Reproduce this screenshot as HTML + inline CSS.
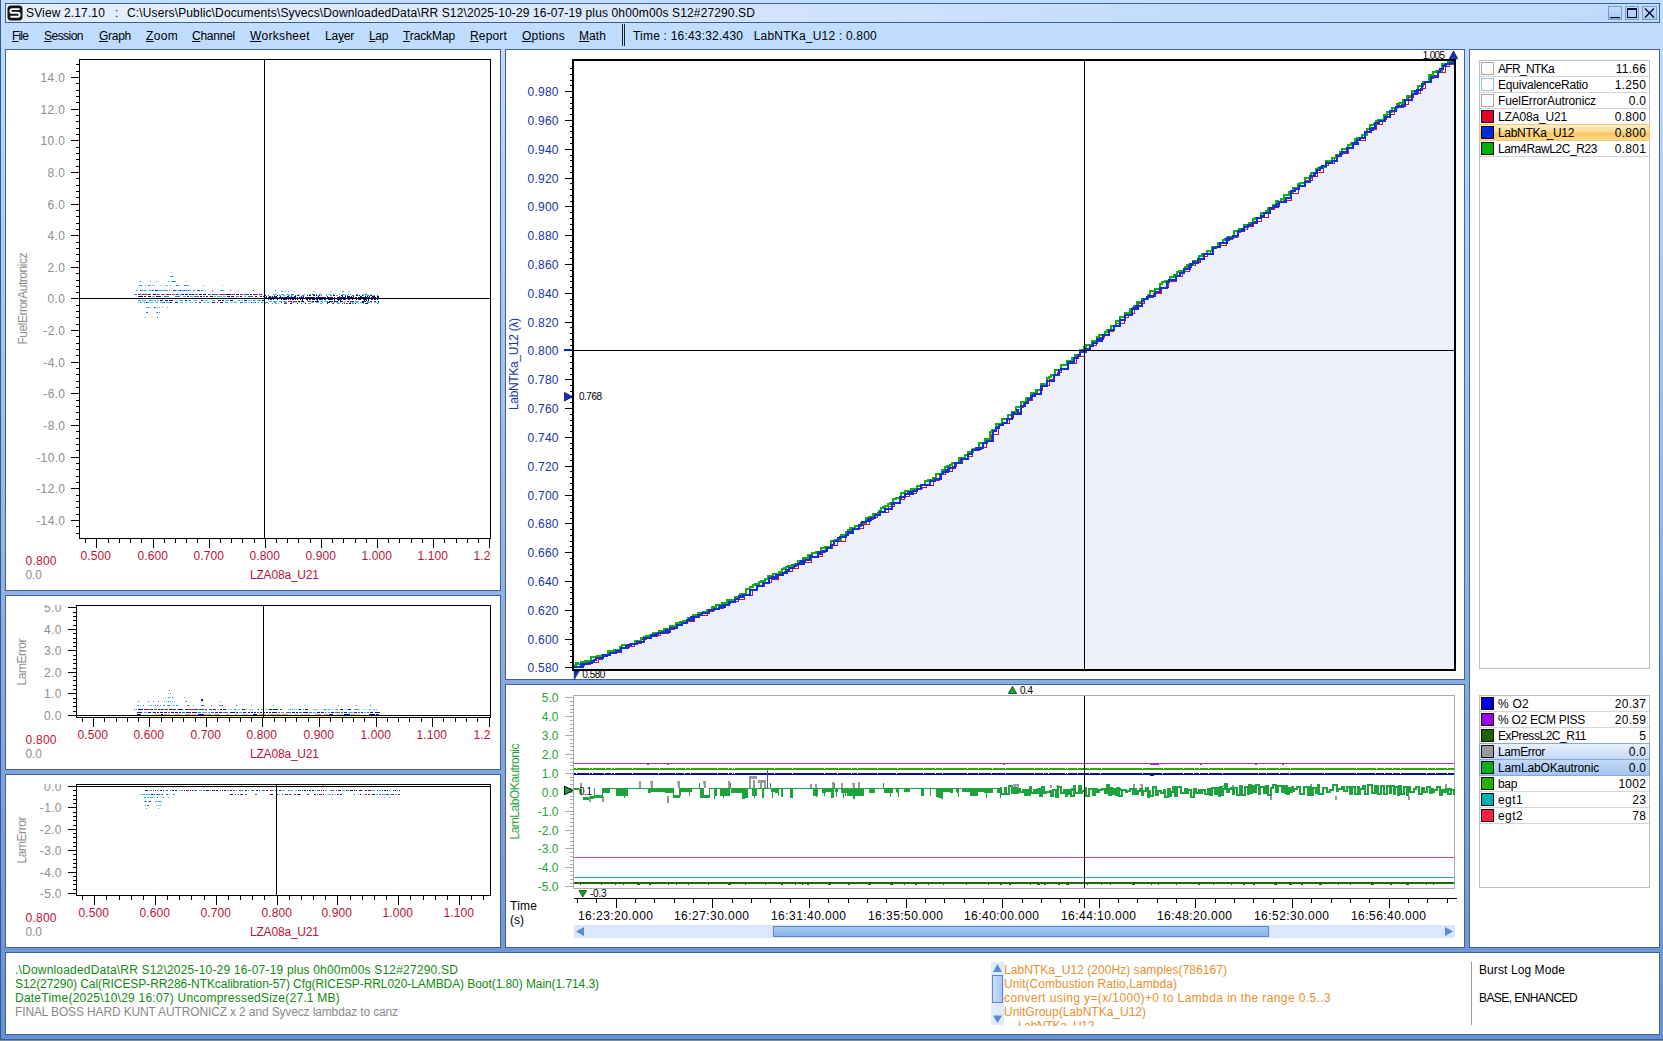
<!DOCTYPE html>
<html lang="en"><head><meta charset="utf-8"><title>SView 2.17.10</title>
<style>
html,body{margin:0;padding:0}
body{width:1663px;height:1041px;overflow:hidden;position:relative;font-family:"Liberation Sans",sans-serif;font-size:12px;color:#000;
background:linear-gradient(to bottom,#c1ddff 0px,#c1ddff 24px,#6592d2 1041px)}
.p{position:absolute;background:#fff;border:1px solid #45608f;box-sizing:border-box}
.t{position:absolute;white-space:nowrap;line-height:14px;height:14px}
.b{position:absolute;box-sizing:border-box}
#charts{position:absolute;left:0;top:0;pointer-events:none}
u{text-decoration:underline;text-underline-offset:1px}
.row{position:absolute;left:1480px;width:169px;height:16px;box-sizing:border-box;border-bottom:1px solid #d4d4d4}
.sw{position:absolute;left:1px;top:1px;width:13px;height:13px;box-sizing:border-box;border:1px solid #111}
.row .n{position:absolute;left:18px;top:1px;line-height:14px;white-space:nowrap}
.row .v{position:absolute;right:3px;top:1px;letter-spacing:0.3px;margin-right:-0.3px;line-height:14px;white-space:nowrap}

</style></head>
<body>
<div class="b" style="left:0px;top:0px;width:1px;height:1041px;background:#36568c"></div>
<div class="b" style="left:0px;top:1039px;width:1663px;height:1px;background:#3f5e94"></div>
<div class="b" style="left:0px;top:1040px;width:1663px;height:1px;background:#7f8b9b"></div>
<div class="p" style="left:5px;top:3px;width:1655px;height:20px;background:linear-gradient(to right,#e6f0fd 0,#dbe9fc 30%,#c1dbfc 75%,#c0dafb 100%);border-color:#3f5e94"></div>
<svg class="b" style="left:7px;top:5px" width="16" height="16" viewBox="0 0 16 16"><rect x="0.5" y="0.5" width="15" height="15" rx="3.5" fill="#111"/><path d="M12.6 4.1H5.2C3.6 4.1 3.4 5 3.4 5.9s.5 1.9 1.8 1.9h5.6c1.2 0 1.8.9 1.8 1.9s-.4 2-1.8 2H3.4" fill="none" stroke="#fff" stroke-width="1.9"/></svg>
<div class="t" id="title" style="top:6px;color:#000;left:26px;letter-spacing:0.141px;">SView 2.17.10</div>
<div class="t" id="title2" style="top:6px;color:#000;left:115px;">:</div>
<div class="t" id="title3" style="top:6px;color:#000;left:127px;letter-spacing:0.129px;">C:\Users\Public\Documents\Syvecs\DownloadedData\RR S12\2025-10-29 16-07-19 plus 0h00m00s S12#27290.SD</div>
<div class="b" style="left:1608px;top:6px;width:14px;height:14px;border:1px solid #7b9ccf;background:linear-gradient(#c6dcfc,#a9c8f6)"></div>
<div class="b" style="left:1625px;top:6px;width:14px;height:14px;border:1px solid #7b9ccf;background:linear-gradient(#c6dcfc,#a9c8f6)"></div>
<div class="b" style="left:1642px;top:6px;width:15px;height:14px;border:1px solid #7b9ccf;background:linear-gradient(#c6dcfc,#a9c8f6)"></div>
<svg class="b" style="left:1608px;top:6px" width="49" height="14" viewBox="0 0 49 14"><rect x="2" y="11" width="10" height="1.2" fill="#0a0a2a"/><rect x="19.5" y="3" width="9" height="8.5" fill="none" stroke="#0a0a2a" stroke-width="1"/><rect x="19" y="2" width="10" height="2" fill="#0a0a2a"/><path d="M37 2.5L46 11.5M46 2.5L37 11.5" stroke="#0a0a2a" stroke-width="1.4" fill="none"/></svg>
<div class="t" id="m0" style="top:29px;color:#000;left:12px;letter-spacing:-0.84px;"><u>F</u>ile</div>
<div class="t" id="m1" style="top:29px;color:#000;left:44px;letter-spacing:-0.529px;"><u>S</u>ession</div>
<div class="t" id="m2" style="top:29px;color:#000;left:99px;letter-spacing:-0.275px;"><u>G</u>raph</div>
<div class="t" id="m3" style="top:29px;color:#000;left:146px;letter-spacing:0.328px;"><u>Z</u>oom</div>
<div class="t" id="m4" style="top:29px;color:#000;left:192px;letter-spacing:-0.246px;"><u>C</u>hannel</div>
<div class="t" id="m5" style="top:29px;color:#000;left:250px;letter-spacing:0.318px;"><u>W</u>orksheet</div>
<div class="t" id="m6" style="top:29px;color:#000;left:325px;letter-spacing:-0.206px;">La<u>y</u>er</div>
<div class="t" id="m7" style="top:29px;color:#000;left:369px;letter-spacing:-0.349px;"><u>L</u>ap</div>
<div class="t" id="m8" style="top:29px;color:#000;left:403px;letter-spacing:-0.113px;"><u>T</u>rackMap</div>
<div class="t" id="m9" style="top:29px;color:#000;left:470px;letter-spacing:0.161px;"><u>R</u>eport</div>
<div class="t" id="m10" style="top:29px;color:#000;left:522px;letter-spacing:0.232px;"><u>O</u>ptions</div>
<div class="t" id="m11" style="top:29px;color:#000;left:579px;letter-spacing:0.078px;"><u>M</u>ath</div>
<div class="b" style="left:622px;top:24px;width:1px;height:22px;background:#222"></div>
<div class="b" style="left:624px;top:24px;width:1px;height:22px;background:#222"></div>
<div class="t" id="mtime" style="top:29px;color:#000;left:633px;letter-spacing:0.202px;">Time : 16:43:32.430 &nbsp; LabNTKa_U12 : 0.800</div>
<div class="p" style="left:5px;top:49px;width:496px;height:542px;"></div>
<div class="p" style="left:5px;top:595px;width:496px;height:175px;"></div>
<div class="p" style="left:5px;top:774px;width:496px;height:174px;"></div>
<div class="p" style="left:505px;top:49px;width:960px;height:631px;"></div>
<div class="p" style="left:505px;top:684px;width:960px;height:264px;"></div>
<div class="p" style="left:1469px;top:49px;width:191px;height:899px;"></div>
<div class="p" style="left:5px;top:952px;width:1655px;height:83px;"></div>
<div class="b" style="left:1479px;top:60px;width:171px;height:609px;border:1px solid #c0c0c0"></div>
<div class="b" style="left:1479px;top:695px;width:171px;height:193px;border:1px solid #c0c0c0"></div>
<div class="row" style="top:61px;"><div class="sw" style="background:#fff;border-color:#a8a8a8"></div><div class="n" id="la0" style="letter-spacing:-0.67px;">AFR_NTKa</div><div class="v">11.66</div></div>
<div class="row" style="top:77px;"><div class="sw" style="background:#fff;border-color:#9cc4e4"></div><div class="n" id="la1" style="letter-spacing:-0.213px;">EquivalenceRatio</div><div class="v">1.250</div></div>
<div class="row" style="top:93px;"><div class="sw" style="background:#fff;border-color:#a8a8a8"></div><div class="n" id="la2" style="letter-spacing:-0.113px;">FuelErrorAutronicz</div><div class="v">0.0</div></div>
<div class="row" style="top:109px;"><div class="sw" style="background:#e00028;border-color:#111"></div><div class="n" id="la3" style="letter-spacing:-0.172px;">LZA08a_U21</div><div class="v">0.800</div></div>
<div class="b" style="left:1479px;top:124px;width:171px;height:17px;border:1px solid #f2c47c;background:linear-gradient(#fdedc8,#fcdb94 45%,#fbc65e 55%,#fcd98e)"></div>
<div class="row" style="top:125px;border-bottom-color:transparent;"><div class="sw" style="background:#0028e0;border-color:#111"></div><div class="n" id="la4" style="letter-spacing:-0.308px;">LabNTKa_U12</div><div class="v">0.800</div></div>
<div class="row" style="top:141px;"><div class="sw" style="background:#00b000;border-color:#111"></div><div class="n" id="la5" style="letter-spacing:-0.41px;">Lam4RawL2C_R23</div><div class="v">0.801</div></div>
<div class="row" style="top:696px;"><div class="sw" style="background:#0000dc;border-color:#111"></div><div class="n" id="lb0" style="letter-spacing:0.246px;">% O2</div><div class="v">20.37</div></div>
<div class="row" style="top:712px;"><div class="sw" style="background:#a000f0;border-color:#111"></div><div class="n" id="lb1" style="letter-spacing:-0.285px;">% O2 ECM PISS</div><div class="v">20.59</div></div>
<div class="row" style="top:728px;"><div class="sw" style="background:#1a6400;border-color:#111"></div><div class="n" id="lb2" style="letter-spacing:-0.464px;">ExPressL2C_R11</div><div class="v">5</div></div>
<div class="b" style="left:1479px;top:743px;width:171px;height:17px;border:1px solid #88a9d8;background:linear-gradient(#eaf1fc,#c4d9f7)"></div>
<div class="row" style="top:744px;border-bottom-color:transparent;"><div class="sw" style="background:#999;border-color:#111"></div><div class="n" id="lb3" style="letter-spacing:-0.377px;">LamError</div><div class="v">0.0</div></div>
<div class="b" style="left:1479px;top:759px;width:171px;height:17px;border:1px solid #88a9d8;background:linear-gradient(#c4d9f7,#a6c5f2)"></div>
<div class="row" style="top:760px;border-bottom-color:transparent;"><div class="sw" style="background:#08b020;border-color:#111"></div><div class="n" id="lb4" style="letter-spacing:-0.15px;">LamLabOKautronic</div><div class="v">0.0</div></div>
<div class="row" style="top:776px;"><div class="sw" style="background:#28b000;border-color:#111"></div><div class="n" id="lb5" style="letter-spacing:-0.344px;">bap</div><div class="v">1002</div></div>
<div class="row" style="top:792px;"><div class="sw" style="background:#00b0b0;border-color:#111"></div><div class="n" id="lb6" style="letter-spacing:0.41px;">egt1</div><div class="v">23</div></div>
<div class="row" style="top:808px;"><div class="sw" style="background:#ff2040;border-color:#111"></div><div class="n" id="lb7" style="letter-spacing:0.41px;">egt2</div><div class="v">78</div></div>
<div class="t" id="s1" style="top:963px;color:#108a10;left:15px;letter-spacing:0.191px;">.\DownloadedData\RR S12\2025-10-29 16-07-19 plus 0h00m00s S12#27290.SD</div>
<div class="t" id="s2" style="top:977px;color:#108a10;left:15px;letter-spacing:-0.071px;">S12(27290) Cal(RICESP-RR286-NTKcalibration-57) Cfg(RICESP-RRL020-LAMBDA) Boot(1.80) Main(1.714.3)</div>
<div class="t" id="s3" style="top:991px;color:#108a10;left:15px;letter-spacing:0.23px;">DateTime(2025\10\29 16:07) UncompressedSize(27.1 MB)</div>
<div class="t" id="s4" style="top:1005px;color:#8a8a8a;left:15px;letter-spacing:-0.139px;">FINAL BOSS HARD KUNT AUTRONICZ x 2 and Syvecz lambdaz to canz</div>
<div class="b" style="left:990px;top:962px;width:520px;height:63px;overflow:hidden"></div>
<div class="t" id="o1" style="top:963px;color:#e8902c;left:1004px;letter-spacing:0.044px;">LabNTKa_U12 (200Hz) samples(786167)</div>
<div class="t" id="o2" style="top:977px;color:#e8902c;left:1004px;letter-spacing:0.054px;">Unit(Combustion Ratio,Lambda)</div>
<div class="t" id="o3" style="top:991px;color:#e8902c;left:1004px;letter-spacing:0.383px;">convert using y=(x/1000)+0 to Lambda in the range 0.5..3</div>
<div class="t" id="o4" style="top:1005px;color:#e8902c;left:1004px;letter-spacing:-0.004px;">UnitGroup(LabNTKa_U12)</div>
<div class="t" id="o5" style="top:1019px;color:#e8902c;left:1018px;letter-spacing:-0.308px;height:7px;overflow:hidden;">LabNTKa_U12</div>
<div class="b" style="left:991px;top:962px;width:13px;height:63px;background:#dfeafb"></div>
<div class="b" style="left:992px;top:975px;width:11px;height:28px;border:1px solid #5f86c4;background:linear-gradient(to right,#cfe0fa,#a9c7f3)"></div>
<svg class="b" style="left:991px;top:962px" width="13" height="63" viewBox="0 0 13 63"><path d="M2 10L6.5 2L11 10Z" fill="#5b8ad0"/><path d="M2 53.5L6.5 61L11 53.5Z" fill="#5b8ad0"/></svg>
<div class="b" style="left:1471px;top:962px;width:1px;height:63px;background:#9a9a9a"></div>
<div class="t" id="b1" style="top:963px;color:#000;left:1479px;letter-spacing:0.092px;">Burst Log Mode</div>
<div class="t" id="b2" style="top:991px;color:#000;left:1479px;letter-spacing:-0.574px;">BASE, ENHANCED</div>

<svg id="charts" width="1663" height="1041" viewBox="0 0 1663 1041" font-family='"Liberation Sans", sans-serif'>
<path d="M134 294h1v1h-1zM136 294h1v1h-1zM142 294h1v1h-1zM140 281h1v1h-1zM145 294h1v1h-1zM144 290h1v1h-1zM144 294h1v1h-1zM149 294h1v1h-1zM150 294h1v1h-1zM152 290h1v1h-1zM153 290h1v1h-1zM148 285h1v1h-1zM152 294h1v1h-1zM157 294h1v1h-1zM158 294h1v1h-1zM162 294h1v1h-1zM157 290h1v1h-1zM161 294h1v1h-1zM167 290h1v1h-1zM165 285h1v1h-1zM166 294h1v1h-1zM172 294h1v1h-1zM175 294h1v1h-1zM166 290h1v1h-1zM169 290h1v1h-1zM176 285h1v1h-1zM173 281h1v1h-1zM174 281h1v1h-1zM172 276h1v1h-1zM179 290h1v1h-1zM178 285h1v1h-1zM187 294h1v1h-1zM182 290h1v1h-1zM184 290h1v1h-1zM186 290h1v1h-1zM189 290h1v1h-1zM190 290h1v1h-1zM184 285h1v1h-1zM186 285h1v1h-1zM196 294h1v1h-1zM205 294h1v1h-1zM212 290h1v1h-1zM221 290h1v1h-1zM230 294h1v1h-1zM232 294h1v1h-1zM230 290h1v1h-1zM236 294h1v1h-1zM240 294h1v1h-1zM253 290h1v1h-1zM283 294h1v1h-1zM316 294h1v1h-1zM333 294h1v1h-1zM144 302h1v1h-1zM150 302h1v1h-1zM148 307h1v1h-1zM146 312h1v1h-1zM147 312h1v1h-1zM160 302h1v1h-1zM162 302h1v1h-1zM154 307h1v1h-1zM155 307h1v1h-1zM157 312h1v1h-1zM157 317h1v1h-1zM161 302h1v1h-1zM355 302h1v1h-1zM240 302h1v1h-1zM255 302h1v1h-1zM164 296h5v1h-5zM175 296h5v1h-5zM194 296h5v1h-5zM203 296h2v1h-2zM236 296h3v1h-3zM248 296h5v1h-5zM291 294h3v1h-3zM312 294h3v1h-3zM319 294h2v1h-2zM348 294h1v1h-1zM365 294h2v1h-2zM268 295h1v1h-1zM295 295h1v1h-1zM302 295h2v1h-2zM318 295h2v1h-2zM321 295h1v1h-1zM352 295h2v1h-2zM362 295h2v1h-2zM367 295h2v1h-2zM377 295h1v1h-1z" fill="#2a6ad0" shape-rendering="crispEdges"/>
<path d="M135 294h1v1h-1zM140 294h1v1h-1zM145 294h1v1h-1zM136 290h1v1h-1zM137 290h1v1h-1zM140 290h1v1h-1zM142 290h1v1h-1zM144 290h1v1h-1zM139 285h1v1h-1zM140 285h1v1h-1zM141 285h1v1h-1zM141 294h1v1h-1zM143 294h1v1h-1zM147 294h1v1h-1zM146 290h1v1h-1zM145 285h1v1h-1zM145 294h1v1h-1zM146 294h1v1h-1zM154 294h1v1h-1zM155 294h1v1h-1zM156 294h1v1h-1zM149 290h1v1h-1zM150 290h1v1h-1zM149 285h1v1h-1zM150 285h1v1h-1zM152 285h1v1h-1zM150 281h1v1h-1zM155 294h1v1h-1zM159 294h1v1h-1zM155 290h1v1h-1zM158 290h1v1h-1zM160 290h1v1h-1zM154 285h1v1h-1zM156 281h1v1h-1zM161 294h1v1h-1zM163 294h1v1h-1zM164 294h1v1h-1zM168 294h1v1h-1zM163 290h1v1h-1zM161 294h1v1h-1zM162 294h1v1h-1zM163 294h1v1h-1zM164 294h1v1h-1zM167 294h1v1h-1zM168 294h1v1h-1zM170 294h1v1h-1zM173 294h1v1h-1zM178 294h1v1h-1zM180 294h1v1h-1zM181 294h1v1h-1zM165 290h1v1h-1zM167 290h1v1h-1zM174 290h1v1h-1zM175 290h1v1h-1zM178 290h1v1h-1zM165 285h1v1h-1zM167 285h1v1h-1zM170 285h1v1h-1zM177 285h1v1h-1zM168 281h1v1h-1zM171 281h1v1h-1zM172 281h1v1h-1zM175 281h1v1h-1zM170 276h1v1h-1zM171 276h1v1h-1zM175 294h1v1h-1zM176 294h1v1h-1zM180 294h1v1h-1zM181 294h1v1h-1zM182 294h1v1h-1zM191 294h1v1h-1zM183 290h1v1h-1zM185 290h1v1h-1zM187 290h1v1h-1zM188 290h1v1h-1zM187 285h1v1h-1zM188 285h1v1h-1zM192 294h1v1h-1zM193 294h1v1h-1zM194 290h1v1h-1zM199 294h1v1h-1zM201 290h1v1h-1zM202 290h1v1h-1zM203 285h1v1h-1zM210 294h1v1h-1zM212 294h1v1h-1zM213 294h1v1h-1zM214 294h1v1h-1zM219 294h1v1h-1zM220 294h1v1h-1zM225 294h1v1h-1zM220 290h1v1h-1zM222 290h1v1h-1zM223 290h1v1h-1zM229 294h1v1h-1zM231 294h1v1h-1zM238 294h1v1h-1zM251 294h1v1h-1zM253 294h1v1h-1zM254 294h1v1h-1zM276 294h1v1h-1zM275 290h1v1h-1zM292 294h1v1h-1zM326 294h1v1h-1zM339 294h1v1h-1zM348 294h1v1h-1zM357 294h1v1h-1zM140 302h1v1h-1zM147 302h1v1h-1zM148 302h1v1h-1zM146 307h1v1h-1zM147 307h1v1h-1zM145 317h1v1h-1zM149 302h1v1h-1zM150 307h1v1h-1zM152 302h1v1h-1zM155 302h1v1h-1zM156 302h1v1h-1zM161 302h1v1h-1zM157 307h1v1h-1zM159 307h1v1h-1zM156 312h1v1h-1zM159 312h1v1h-1zM160 302h1v1h-1zM162 302h1v1h-1zM163 302h1v1h-1zM162 307h1v1h-1zM166 302h1v1h-1zM168 302h1v1h-1zM169 302h1v1h-1zM167 307h1v1h-1zM175 302h1v1h-1zM361 302h1v1h-1zM368 302h1v1h-1zM376 302h1v1h-1zM145 290h3v1h-3zM161 290h2v1h-2zM164 290h3v1h-3zM177 290h1v1h-1zM188 290h3v1h-3zM193 290h1v1h-1zM152 296h3v1h-3zM183 296h3v1h-3zM190 296h3v1h-3zM214 296h2v1h-2zM217 296h5v1h-5zM223 296h3v1h-3zM244 296h2v1h-2zM138 300h3v1h-3zM142 300h4v1h-4zM149 300h4v1h-4zM154 300h2v1h-2zM157 300h2v1h-2zM179 300h4v1h-4zM188 300h3v1h-3zM194 300h3v1h-3zM212 300h3v1h-3zM225 300h4v1h-4zM238 300h2v1h-2zM253 300h3v1h-3zM257 300h4v1h-4zM138 302h1v1h-1zM140 302h2v1h-2zM156 302h2v1h-2zM162 302h1v1h-1zM166 302h2v1h-2zM195 302h2v1h-2zM207 302h3v1h-3zM225 302h3v1h-3zM234 302h3v1h-3zM241 302h2v1h-2zM244 302h3v1h-3zM253 302h2v1h-2zM261 302h2v1h-2zM265 302h3v1h-3zM274 302h2v1h-2zM284 302h3v1h-3zM291 302h3v1h-3zM299 302h1v1h-1zM303 302h2v1h-2zM311 302h3v1h-3zM316 302h3v1h-3zM322 302h1v1h-1zM331 302h1v1h-1zM333 302h2v1h-2zM340 302h1v1h-1zM349 302h2v1h-2zM352 302h2v1h-2zM360 302h1v1h-1zM367 302h3v1h-3zM273 294h3v1h-3zM281 294h3v1h-3zM286 294h3v1h-3zM298 294h2v1h-2zM304 294h1v1h-1zM309 294h2v1h-2zM329 294h2v1h-2zM342 294h3v1h-3zM356 294h1v1h-1zM281 291h2v1h-2zM288 291h1v1h-1zM342 291h2v1h-2zM274 295h1v1h-1zM279 295h2v1h-2zM283 295h2v1h-2zM288 295h2v1h-2zM291 295h2v1h-2zM326 295h1v1h-1zM330 295h2v1h-2zM336 295h2v1h-2zM347 295h1v1h-1zM365 295h1v1h-1zM373 295h2v1h-2zM269 301h3v1h-3zM273 301h4v1h-4zM279 301h3v1h-3zM283 301h4v1h-4zM320 301h3v1h-3zM324 301h4v1h-4zM344 301h2v1h-2zM355 301h4v1h-4zM367 301h2v1h-2zM264 303h2v1h-2zM268 303h1v1h-1zM272 303h1v1h-1zM275 303h2v1h-2zM278 303h1v1h-1zM308 303h3v1h-3zM320 303h2v1h-2zM337 303h3v1h-3zM352 303h2v1h-2zM358 303h1v1h-1zM363 303h1v1h-1zM377 303h2v1h-2z" fill="#38b4e4" shape-rendering="crispEdges"/>
<path d="M139 294h1v1h-1zM141 290h1v1h-1zM143 290h1v1h-1zM142 285h1v1h-1zM149 294h1v1h-1zM143 290h1v1h-1zM152 294h1v1h-1zM146 290h1v1h-1zM147 290h1v1h-1zM151 290h1v1h-1zM156 294h1v1h-1zM159 290h1v1h-1zM158 294h1v1h-1zM162 294h1v1h-1zM164 294h1v1h-1zM160 285h1v1h-1zM174 294h1v1h-1zM179 294h1v1h-1zM177 290h1v1h-1zM166 285h1v1h-1zM169 281h1v1h-1zM169 276h1v1h-1zM171 272h1v1h-1zM174 294h1v1h-1zM177 294h1v1h-1zM176 290h1v1h-1zM183 294h1v1h-1zM186 294h1v1h-1zM185 285h1v1h-1zM186 281h1v1h-1zM194 294h1v1h-1zM195 294h1v1h-1zM203 290h1v1h-1zM205 290h1v1h-1zM221 294h1v1h-1zM224 294h1v1h-1zM222 285h1v1h-1zM237 294h1v1h-1zM238 290h1v1h-1zM246 294h1v1h-1zM274 294h1v1h-1zM299 294h1v1h-1zM307 294h1v1h-1zM364 294h1v1h-1zM371 294h1v1h-1zM176 300h2v1h-2zM204 300h4v1h-4zM241 300h2v1h-2zM248 300h4v1h-4zM143 302h1v1h-1zM149 302h3v1h-3zM180 302h3v1h-3zM185 302h3v1h-3zM190 302h3v1h-3zM203 302h3v1h-3zM230 302h3v1h-3zM248 302h2v1h-2zM257 302h3v1h-3zM295 302h2v1h-2zM336 302h3v1h-3zM343 302h2v1h-2zM355 302h3v1h-3zM371 302h1v1h-1zM374 302h3v1h-3zM378 302h2v1h-2zM279 294h1v1h-1zM350 294h2v1h-2zM362 294h2v1h-2zM284 291h2v1h-2zM294 291h1v1h-1zM313 291h2v1h-2zM330 291h2v1h-2zM348 291h2v1h-2z" fill="#7ccdf0" shape-rendering="crispEdges"/>
<path d="M138 294h3v1h-3zM208 294h2v1h-2zM212 294h2v1h-2zM215 294h3v1h-3zM244 294h5v1h-5zM259 294h3v1h-3zM173 290h3v1h-3zM197 290h3v1h-3z" fill="#3a3ab0" shape-rendering="crispEdges"/>
<path d="M142 294h5v1h-5zM148 294h3v1h-3zM157 294h2v1h-2zM162 294h3v1h-3zM166 294h5v1h-5zM172 294h2v1h-2zM176 294h2v1h-2zM196 294h2v1h-2zM220 294h5v1h-5zM232 294h3v1h-3zM240 294h3v1h-3zM253 294h5v1h-5zM288 301h4v1h-4zM293 301h4v1h-4zM308 301h3v1h-3zM347 301h2v1h-2zM350 301h4v1h-4zM370 301h2v1h-2zM374 301h2v1h-2zM284 303h3v1h-3zM301 303h1v1h-1zM332 303h2v1h-2zM342 303h1v1h-1zM344 303h1v1h-1zM346 303h2v1h-2z" fill="#a82038" shape-rendering="crispEdges"/>
<path d="M153 294h3v1h-3zM182 294h2v1h-2zM185 294h3v1h-3zM189 294h2v1h-2zM192 294h2v1h-2zM199 294h3v1h-3zM203 294h3v1h-3zM226 294h5v1h-5zM236 294h3v1h-3zM250 294h2v1h-2zM140 290h1v1h-1zM155 290h2v1h-2zM180 290h1v1h-1zM138 296h5v1h-5zM144 296h2v1h-2zM148 296h3v1h-3zM156 296h5v1h-5zM187 296h2v1h-2zM200 296h2v1h-2zM206 296h2v1h-2zM210 296h3v1h-3zM227 296h3v1h-3zM231 296h3v1h-3zM240 296h2v1h-2zM255 296h2v1h-2zM260 296h2v1h-2zM263 296h1v1h-1zM160 300h3v1h-3zM165 300h3v1h-3zM169 300h4v1h-4zM185 300h2v1h-2zM201 300h2v1h-2zM218 300h3v1h-3zM222 300h2v1h-2zM230 300h3v1h-3zM244 300h3v1h-3zM262 300h2v1h-2zM146 302h1v1h-1zM164 302h1v1h-1zM170 302h2v1h-2zM175 302h3v1h-3zM199 302h2v1h-2zM212 302h3v1h-3zM217 302h1v1h-1zM220 302h3v1h-3zM251 302h1v1h-1zM281 302h1v1h-1zM327 302h3v1h-3zM362 302h2v1h-2zM264 295h2v1h-2zM277 295h1v1h-1zM297 295h2v1h-2zM307 295h1v1h-1zM309 295h2v1h-2zM313 295h2v1h-2zM316 295h1v1h-1zM333 295h2v1h-2zM341 295h2v1h-2zM345 295h1v1h-1zM356 295h2v1h-2zM359 295h1v1h-1zM370 295h2v1h-2zM298 301h2v1h-2zM301 301h3v1h-3zM312 301h2v1h-2zM315 301h4v1h-4zM329 301h4v1h-4zM334 301h4v1h-4zM340 301h3v1h-3zM362 301h4v1h-4zM378 301h1v1h-1zM290 303h2v1h-2zM297 303h1v1h-1zM305 303h1v1h-1zM327 303h1v1h-1zM349 303h2v1h-2zM355 303h1v1h-1zM365 303h3v1h-3z" fill="#14148c" shape-rendering="crispEdges"/>
<path d="M264 297h1v3h-1zM265 297h1v2h-1zM266 296h1v2h-1zM268 297h1v3h-1zM269 296h1v3h-1zM270 296h1v4h-1zM271 297h1v3h-1zM272 296h1v3h-1zM273 297h1v3h-1zM274 296h1v3h-1zM275 296h1v3h-1zM276 296h1v3h-1zM277 297h1v3h-1zM279 297h1v2h-1zM280 296h1v3h-1zM281 297h1v3h-1zM282 297h1v2h-1zM283 297h1v3h-1zM284 297h1v3h-1zM285 297h1v3h-1zM286 297h1v3h-1zM287 296h1v3h-1zM288 296h1v4h-1zM289 297h1v2h-1zM290 297h1v3h-1zM291 296h1v2h-1zM292 297h1v3h-1zM293 297h1v3h-1zM294 296h1v3h-1zM295 296h1v4h-1zM297 297h1v3h-1zM299 297h1v2h-1zM300 297h1v3h-1zM301 296h1v3h-1zM302 297h1v4h-1zM303 296h1v2h-1zM305 297h1v2h-1zM306 297h1v3h-1zM307 297h1v4h-1zM308 297h1v2h-1zM309 297h1v3h-1zM310 297h1v3h-1zM311 297h1v2h-1zM312 297h1v3h-1zM313 297h1v3h-1zM314 297h1v3h-1zM316 297h1v3h-1zM317 297h1v4h-1zM318 296h1v2h-1zM319 297h1v3h-1zM320 297h1v3h-1zM321 297h1v3h-1zM322 297h1v3h-1zM323 297h1v2h-1zM324 297h1v3h-1zM325 297h1v3h-1zM327 296h1v2h-1zM328 297h1v3h-1zM329 297h1v3h-1zM330 297h1v3h-1zM331 297h1v3h-1zM332 297h1v3h-1zM334 297h1v4h-1zM337 297h1v3h-1zM338 297h1v4h-1zM339 296h1v4h-1zM340 297h1v4h-1zM341 297h1v3h-1zM342 296h1v3h-1zM343 297h1v3h-1zM344 297h1v3h-1zM345 296h1v4h-1zM347 296h1v2h-1zM348 296h1v4h-1zM349 296h1v4h-1zM350 297h1v2h-1zM351 296h1v3h-1zM352 297h1v3h-1zM353 296h1v3h-1zM355 297h1v2h-1zM356 297h1v3h-1zM358 297h1v3h-1zM359 297h1v3h-1zM360 296h1v4h-1zM361 296h1v3h-1zM362 297h1v2h-1zM363 297h1v3h-1zM364 297h1v4h-1zM365 296h1v4h-1zM366 297h1v4h-1zM367 296h1v3h-1zM368 297h1v4h-1zM369 296h1v3h-1zM371 297h1v3h-1zM372 296h1v4h-1zM373 296h1v3h-1zM374 296h1v4h-1zM375 297h1v3h-1zM377 296h1v4h-1zM378 296h1v3h-1z" fill="#14148c" shape-rendering="crispEdges"/>
<rect x="79.5" y="59.5" width="411" height="479" fill="none" stroke="#000" stroke-width="1" />
<rect x="76" y="533" width="3" height="1" fill="#000" />
<rect x="76" y="526" width="3" height="1" fill="#000" />
<rect x="71" y="520" width="8" height="1" fill="#000" />
<rect x="76" y="514" width="3" height="1" fill="#000" />
<rect x="76" y="507" width="3" height="1" fill="#000" />
<rect x="76" y="501" width="3" height="1" fill="#000" />
<rect x="76" y="495" width="3" height="1" fill="#000" />
<rect x="71" y="488" width="8" height="1" fill="#000" />
<rect x="76" y="482" width="3" height="1" fill="#000" />
<rect x="76" y="476" width="3" height="1" fill="#000" />
<rect x="76" y="469" width="3" height="1" fill="#000" />
<rect x="76" y="463" width="3" height="1" fill="#000" />
<rect x="71" y="457" width="8" height="1" fill="#000" />
<rect x="76" y="450" width="3" height="1" fill="#000" />
<rect x="76" y="444" width="3" height="1" fill="#000" />
<rect x="76" y="438" width="3" height="1" fill="#000" />
<rect x="76" y="431" width="3" height="1" fill="#000" />
<rect x="71" y="425" width="8" height="1" fill="#000" />
<rect x="76" y="419" width="3" height="1" fill="#000" />
<rect x="76" y="412" width="3" height="1" fill="#000" />
<rect x="76" y="406" width="3" height="1" fill="#000" />
<rect x="76" y="400" width="3" height="1" fill="#000" />
<rect x="71" y="393" width="8" height="1" fill="#000" />
<rect x="76" y="387" width="3" height="1" fill="#000" />
<rect x="76" y="381" width="3" height="1" fill="#000" />
<rect x="76" y="374" width="3" height="1" fill="#000" />
<rect x="76" y="368" width="3" height="1" fill="#000" />
<rect x="71" y="362" width="8" height="1" fill="#000" />
<rect x="76" y="355" width="3" height="1" fill="#000" />
<rect x="76" y="349" width="3" height="1" fill="#000" />
<rect x="76" y="343" width="3" height="1" fill="#000" />
<rect x="76" y="336" width="3" height="1" fill="#000" />
<rect x="71" y="330" width="8" height="1" fill="#000" />
<rect x="76" y="324" width="3" height="1" fill="#000" />
<rect x="76" y="317" width="3" height="1" fill="#000" />
<rect x="76" y="311" width="3" height="1" fill="#000" />
<rect x="76" y="305" width="3" height="1" fill="#000" />
<rect x="71" y="298" width="8" height="1" fill="#000" />
<rect x="76" y="292" width="3" height="1" fill="#000" />
<rect x="76" y="286" width="3" height="1" fill="#000" />
<rect x="76" y="280" width="3" height="1" fill="#000" />
<rect x="76" y="273" width="3" height="1" fill="#000" />
<rect x="71" y="267" width="8" height="1" fill="#000" />
<rect x="76" y="261" width="3" height="1" fill="#000" />
<rect x="76" y="254" width="3" height="1" fill="#000" />
<rect x="76" y="248" width="3" height="1" fill="#000" />
<rect x="76" y="242" width="3" height="1" fill="#000" />
<rect x="71" y="235" width="8" height="1" fill="#000" />
<rect x="76" y="229" width="3" height="1" fill="#000" />
<rect x="76" y="223" width="3" height="1" fill="#000" />
<rect x="76" y="216" width="3" height="1" fill="#000" />
<rect x="76" y="210" width="3" height="1" fill="#000" />
<rect x="71" y="204" width="8" height="1" fill="#000" />
<rect x="76" y="197" width="3" height="1" fill="#000" />
<rect x="76" y="191" width="3" height="1" fill="#000" />
<rect x="76" y="185" width="3" height="1" fill="#000" />
<rect x="76" y="178" width="3" height="1" fill="#000" />
<rect x="71" y="172" width="8" height="1" fill="#000" />
<rect x="76" y="166" width="3" height="1" fill="#000" />
<rect x="76" y="159" width="3" height="1" fill="#000" />
<rect x="76" y="153" width="3" height="1" fill="#000" />
<rect x="76" y="147" width="3" height="1" fill="#000" />
<rect x="71" y="140" width="8" height="1" fill="#000" />
<rect x="76" y="134" width="3" height="1" fill="#000" />
<rect x="76" y="128" width="3" height="1" fill="#000" />
<rect x="76" y="121" width="3" height="1" fill="#000" />
<rect x="76" y="115" width="3" height="1" fill="#000" />
<rect x="71" y="109" width="8" height="1" fill="#000" />
<rect x="76" y="102" width="3" height="1" fill="#000" />
<rect x="76" y="96" width="3" height="1" fill="#000" />
<rect x="76" y="90" width="3" height="1" fill="#000" />
<rect x="76" y="83" width="3" height="1" fill="#000" />
<rect x="71" y="77" width="8" height="1" fill="#000" />
<rect x="76" y="71" width="3" height="1" fill="#000" />
<rect x="76" y="64" width="3" height="1" fill="#000" />
<rect x="85" y="539" width="1" height="4" fill="#000" />
<rect x="96" y="539" width="1" height="9" fill="#000" />
<rect x="108" y="539" width="1" height="4" fill="#000" />
<rect x="119" y="539" width="1" height="4" fill="#000" />
<rect x="130" y="539" width="1" height="4" fill="#000" />
<rect x="141" y="539" width="1" height="4" fill="#000" />
<rect x="153" y="539" width="1" height="9" fill="#000" />
<rect x="164" y="539" width="1" height="4" fill="#000" />
<rect x="175" y="539" width="1" height="4" fill="#000" />
<rect x="186" y="539" width="1" height="4" fill="#000" />
<rect x="197" y="539" width="1" height="4" fill="#000" />
<rect x="209" y="539" width="1" height="9" fill="#000" />
<rect x="220" y="539" width="1" height="4" fill="#000" />
<rect x="231" y="539" width="1" height="4" fill="#000" />
<rect x="242" y="539" width="1" height="4" fill="#000" />
<rect x="254" y="539" width="1" height="4" fill="#000" />
<rect x="265" y="539" width="1" height="9" fill="#000" />
<rect x="276" y="539" width="1" height="4" fill="#000" />
<rect x="287" y="539" width="1" height="4" fill="#000" />
<rect x="298" y="539" width="1" height="4" fill="#000" />
<rect x="310" y="539" width="1" height="4" fill="#000" />
<rect x="321" y="539" width="1" height="9" fill="#000" />
<rect x="332" y="539" width="1" height="4" fill="#000" />
<rect x="343" y="539" width="1" height="4" fill="#000" />
<rect x="355" y="539" width="1" height="4" fill="#000" />
<rect x="366" y="539" width="1" height="4" fill="#000" />
<rect x="377" y="539" width="1" height="9" fill="#000" />
<rect x="388" y="539" width="1" height="4" fill="#000" />
<rect x="399" y="539" width="1" height="4" fill="#000" />
<rect x="411" y="539" width="1" height="4" fill="#000" />
<rect x="422" y="539" width="1" height="4" fill="#000" />
<rect x="433" y="539" width="1" height="9" fill="#000" />
<rect x="444" y="539" width="1" height="4" fill="#000" />
<rect x="456" y="539" width="1" height="4" fill="#000" />
<rect x="467" y="539" width="1" height="4" fill="#000" />
<rect x="478" y="539" width="1" height="4" fill="#000" />
<rect x="489" y="539" width="1" height="9" fill="#000" />
<text x="65" y="524.5" fill="#8e8e8e" font-size="12" text-anchor="end" textLength="28.7" lengthAdjust="spacing" >-14.0</text>
<text x="65" y="492.5" fill="#8e8e8e" font-size="12" text-anchor="end" textLength="28.7" lengthAdjust="spacing" >-12.0</text>
<text x="65" y="461.5" fill="#8e8e8e" font-size="12" text-anchor="end" textLength="28.7" lengthAdjust="spacing" >-10.0</text>
<text x="65" y="429.5" fill="#8e8e8e" font-size="12" text-anchor="end" textLength="21.7" lengthAdjust="spacing" >-8.0</text>
<text x="65" y="397.5" fill="#8e8e8e" font-size="12" text-anchor="end" textLength="21.7" lengthAdjust="spacing" >-6.0</text>
<text x="65" y="366.5" fill="#8e8e8e" font-size="12" text-anchor="end" textLength="21.7" lengthAdjust="spacing" >-4.0</text>
<text x="65" y="334.5" fill="#8e8e8e" font-size="12" text-anchor="end" textLength="21.7" lengthAdjust="spacing" >-2.0</text>
<text x="65" y="302.5" fill="#8e8e8e" font-size="12" text-anchor="end" textLength="17.5" lengthAdjust="spacing" >0.0</text>
<text x="65" y="271.5" fill="#8e8e8e" font-size="12" text-anchor="end" textLength="17.5" lengthAdjust="spacing" >2.0</text>
<text x="65" y="239.5" fill="#8e8e8e" font-size="12" text-anchor="end" textLength="17.5" lengthAdjust="spacing" >4.0</text>
<text x="65" y="208.5" fill="#8e8e8e" font-size="12" text-anchor="end" textLength="17.5" lengthAdjust="spacing" >6.0</text>
<text x="65" y="176.5" fill="#8e8e8e" font-size="12" text-anchor="end" textLength="17.5" lengthAdjust="spacing" >8.0</text>
<text x="65" y="144.5" fill="#8e8e8e" font-size="12" text-anchor="end" textLength="24.5" lengthAdjust="spacing" >10.0</text>
<text x="65" y="113.5" fill="#8e8e8e" font-size="12" text-anchor="end" textLength="24.5" lengthAdjust="spacing" >12.0</text>
<text x="65" y="81.5" fill="#8e8e8e" font-size="12" text-anchor="end" textLength="24.5" lengthAdjust="spacing" >14.0</text>
<clipPath id="cp1"><rect x="6" y="545" width="484.8" height="40"/></clipPath><g clip-path="url(#cp1)">
<text x="95.7" y="560.3" fill="#b8123a" font-size="12" text-anchor="middle" textLength="30.5" lengthAdjust="spacing" >0.500</text>
<text x="152.7" y="560.3" fill="#b8123a" font-size="12" text-anchor="middle" textLength="30.5" lengthAdjust="spacing" >0.600</text>
<text x="208.7" y="560.3" fill="#b8123a" font-size="12" text-anchor="middle" textLength="30.5" lengthAdjust="spacing" >0.700</text>
<text x="264.7" y="560.3" fill="#b8123a" font-size="12" text-anchor="middle" textLength="30.5" lengthAdjust="spacing" >0.800</text>
<text x="320.7" y="560.3" fill="#b8123a" font-size="12" text-anchor="middle" textLength="30.5" lengthAdjust="spacing" >0.900</text>
<text x="376.7" y="560.3" fill="#b8123a" font-size="12" text-anchor="middle" textLength="30.5" lengthAdjust="spacing" >1.000</text>
<text x="432.7" y="560.3" fill="#b8123a" font-size="12" text-anchor="middle" textLength="30.5" lengthAdjust="spacing" >1.100</text>
<text x="488.7" y="560.3" fill="#b8123a" font-size="12" text-anchor="middle" textLength="30.5" lengthAdjust="spacing" >1.200</text>
</g>
<rect x="264" y="60" width="1" height="478" fill="#000" />
<rect x="71" y="298" width="419" height="1" fill="#000" />
<text x="25.5" y="565.3" fill="#b8123a" font-size="12" text-anchor="start" textLength="31" lengthAdjust="spacing" >0.800</text>
<text x="25.5" y="579" fill="#8e8e8e" font-size="12" text-anchor="start" textLength="16.5" lengthAdjust="spacing" >0.0</text>
<text x="250" y="579" fill="#b8123a" font-size="12" text-anchor="start" textLength="69" lengthAdjust="spacing" >LZA08a_U21</text>
<text transform="translate(26.6,298.5) rotate(-90)" fill="#8e8e8e" font-size="12" text-anchor="middle" textLength="92" lengthAdjust="spacing">FuelErrorAutronicz</text>
<rect x="137" y="716" width="242" height="1" fill="#fdf2b0" />
<path d="M134 709h1v1h-1zM141 709h1v1h-1zM138 705h1v1h-1zM138 701h1v1h-1zM143 705h1v1h-1zM150 709h1v1h-1zM148 701h1v1h-1zM151 709h1v1h-1zM155 709h1v1h-1zM157 705h1v1h-1zM158 701h1v1h-1zM166 709h1v1h-1zM172 709h1v1h-1zM164 705h1v1h-1zM169 705h1v1h-1zM176 705h1v1h-1zM168 701h1v1h-1zM169 690h1v1h-1zM178 709h1v1h-1zM187 705h1v1h-1zM188 705h1v1h-1zM186 701h1v1h-1zM194 709h1v1h-1zM201 705h1v1h-1zM202 705h1v1h-1zM203 705h1v1h-1zM211 705h1v1h-1zM220 705h1v1h-1zM222 705h1v1h-1zM235 709h1v1h-1zM236 705h1v1h-1zM274 709h1v1h-1zM275 709h1v1h-1zM289 709h1v1h-1zM337 709h1v1h-1zM357 709h1v1h-1zM356 705h1v1h-1zM370 705h1v1h-1zM168 712h2v1h-2zM182 712h3v1h-3zM198 712h3v1h-3zM211 712h3v1h-3zM223 712h5v1h-5zM257 712h2v1h-2zM278 712h2v1h-2zM286 712h5v1h-5zM299 712h3v1h-3zM309 712h3v1h-3zM335 712h5v1h-5zM341 712h2v1h-2zM358 712h2v1h-2zM367 712h2v1h-2z" fill="#2a6ad0" shape-rendering="crispEdges"/>
<path d="M136 709h1v1h-1zM138 709h1v1h-1zM139 709h1v1h-1zM142 709h1v1h-1zM144 709h1v1h-1zM145 709h1v1h-1zM145 709h1v1h-1zM146 709h1v1h-1zM147 709h1v1h-1zM148 709h1v1h-1zM149 709h1v1h-1zM149 709h1v1h-1zM152 709h1v1h-1zM151 705h1v1h-1zM155 705h1v1h-1zM153 701h1v1h-1zM156 709h1v1h-1zM160 709h1v1h-1zM160 705h1v1h-1zM163 705h1v1h-1zM160 709h1v1h-1zM163 709h1v1h-1zM167 709h1v1h-1zM169 709h1v1h-1zM174 709h1v1h-1zM175 709h1v1h-1zM167 705h1v1h-1zM168 705h1v1h-1zM171 705h1v1h-1zM174 705h1v1h-1zM164 701h1v1h-1zM166 701h1v1h-1zM170 701h1v1h-1zM174 701h1v1h-1zM168 697h1v1h-1zM169 697h1v1h-1zM172 697h1v1h-1zM170 693h1v1h-1zM175 709h1v1h-1zM177 705h1v1h-1zM179 709h1v1h-1zM185 709h1v1h-1zM187 709h1v1h-1zM188 709h1v1h-1zM189 709h1v1h-1zM184 697h1v1h-1zM191 709h1v1h-1zM193 705h1v1h-1zM200 709h1v1h-1zM201 709h1v1h-1zM206 709h1v1h-1zM202 701h1v1h-1zM211 709h1v1h-1zM213 709h1v1h-1zM218 709h1v1h-1zM223 709h1v1h-1zM219 705h1v1h-1zM221 705h1v1h-1zM220 701h1v1h-1zM228 709h1v1h-1zM234 709h1v1h-1zM249 709h1v1h-1zM252 709h1v1h-1zM251 705h1v1h-1zM262 709h1v1h-1zM273 709h1v1h-1zM273 705h1v1h-1zM281 709h1v1h-1zM290 709h1v1h-1zM292 709h1v1h-1zM298 709h1v1h-1zM303 709h1v1h-1zM305 705h1v1h-1zM323 709h1v1h-1zM325 709h1v1h-1zM325 705h1v1h-1zM332 709h1v1h-1zM338 705h1v1h-1zM369 709h1v1h-1zM376 709h1v1h-1zM144 712h3v1h-3zM202 712h5v1h-5zM208 712h2v1h-2zM239 712h3v1h-3zM281 712h3v1h-3zM313 712h3v1h-3zM325 712h2v1h-2zM328 712h2v1h-2zM348 712h5v1h-5zM364 712h2v1h-2zM246 709h1v1h-1zM261 709h1v1h-1zM288 709h2v1h-2zM294 709h1v1h-1zM296 709h1v1h-1zM302 709h1v1h-1zM313 709h1v1h-1zM324 709h3v1h-3zM328 709h2v1h-2zM354 709h3v1h-3z" fill="#38b4e4" shape-rendering="crispEdges"/>
<path d="M140 705h1v1h-1zM144 709h1v1h-1zM152 709h1v1h-1zM148 705h1v1h-1zM150 705h1v1h-1zM155 709h1v1h-1zM154 705h1v1h-1zM163 709h1v1h-1zM164 709h1v1h-1zM161 709h1v1h-1zM165 709h1v1h-1zM173 709h1v1h-1zM177 709h1v1h-1zM173 705h1v1h-1zM172 701h1v1h-1zM165 697h1v1h-1zM170 697h1v1h-1zM173 697h1v1h-1zM168 693h1v1h-1zM181 709h1v1h-1zM186 709h1v1h-1zM185 701h1v1h-1zM192 709h1v1h-1zM199 709h1v1h-1zM202 709h1v1h-1zM204 705h1v1h-1zM212 709h1v1h-1zM220 709h1v1h-1zM221 709h1v1h-1zM244 709h1v1h-1zM250 709h1v1h-1zM272 709h1v1h-1zM288 709h1v1h-1zM290 705h1v1h-1zM314 709h1v1h-1zM340 709h1v1h-1zM347 709h1v1h-1zM358 709h1v1h-1zM363 709h1v1h-1zM370 709h1v1h-1zM217 709h2v1h-2zM230 709h2v1h-2zM237 709h3v1h-3zM263 709h1v1h-1zM265 709h3v1h-3zM315 709h3v1h-3zM335 709h2v1h-2zM345 709h2v1h-2zM359 709h1v1h-1zM363 709h1v1h-1zM365 709h2v1h-2zM372 709h3v1h-3z" fill="#7ccdf0" shape-rendering="crispEdges"/>
<path d="M201 699h2v2h-2zM138 709h5v1h-5zM151 709h2v1h-2zM158 709h2v1h-2zM169 709h3v1h-3zM178 709h5v1h-5zM185 709h3v1h-3zM195 709h3v1h-3zM137 712h5v1h-5zM148 712h3v1h-3zM153 712h3v1h-3zM157 712h2v1h-2zM160 712h3v1h-3zM164 712h3v1h-3zM171 712h3v1h-3zM175 712h3v1h-3zM179 712h2v1h-2zM186 712h5v1h-5zM192 712h5v1h-5zM215 712h3v1h-3zM219 712h3v1h-3zM230 712h5v1h-5zM236 712h2v1h-2zM243 712h3v1h-3zM248 712h2v1h-2zM251 712h2v1h-2zM254 712h2v1h-2zM260 712h2v1h-2zM263 712h2v1h-2zM266 712h2v1h-2zM269 712h2v1h-2zM272 712h5v1h-5zM292 712h3v1h-3zM296 712h2v1h-2zM303 712h5v1h-5zM317 712h3v1h-3zM321 712h3v1h-3zM331 712h3v1h-3zM344 712h3v1h-3zM354 712h3v1h-3zM361 712h2v1h-2zM370 712h3v1h-3zM375 712h5v1h-5zM220 709h2v1h-2zM223 709h3v1h-3zM242 709h3v1h-3zM258 709h1v1h-1zM269 709h3v1h-3zM273 709h2v1h-2zM276 709h2v1h-2zM280 709h1v1h-1zM299 709h2v1h-2zM305 709h3v1h-3zM340 709h3v1h-3zM348 709h3v1h-3zM137 714h4v1h-4zM161 714h2v1h-2zM198 714h6v1h-6zM253 714h4v1h-4zM329 714h4v1h-4zM344 714h6v1h-6zM369 714h6v1h-6zM376 714h3v1h-3z" fill="#14148c" shape-rendering="crispEdges"/>
<path d="M144 709h5v1h-5zM165 709h3v1h-3zM189 709h5v1h-5zM205 709h2v1h-2z" fill="#a82038" shape-rendering="crispEdges"/>
<path d="M154 709h3v1h-3zM161 709h3v1h-3zM173 709h3v1h-3zM199 709h5v1h-5zM209 709h3v1h-3zM213 709h3v1h-3z" fill="#3a3ab0" shape-rendering="crispEdges"/>
<path d="M154 714h6v1h-6zM164 714h6v1h-6zM192 714h4v1h-4zM226 714h4v1h-4zM243 714h6v1h-6zM289 714h2v1h-2zM294 714h4v1h-4zM304 714h6v1h-6zM337 714h6v1h-6zM351 714h6v1h-6zM358 714h2v1h-2z" fill="#e8c070" shape-rendering="crispEdges"/>
<path d="M175 714h6v1h-6zM185 714h6v1h-6zM214 714h6v1h-6zM264 714h2v1h-2zM268 714h6v1h-6zM275 714h6v1h-6zM301 714h2v1h-2zM315 714h6v1h-6z" fill="#e8a060" shape-rendering="crispEdges"/>
<path d="M205 714h6v1h-6zM235 714h2v1h-2zM259 714h4v1h-4zM282 714h6v1h-6zM324 714h4v1h-4z" fill="#f0a030" shape-rendering="crispEdges"/>
<rect x="76.5" y="605.5" width="414" height="112" fill="none" stroke="#000" stroke-width="1" />
<rect x="68" y="715" width="8" height="1" fill="#000" />
<rect x="73" y="711" width="3" height="1" fill="#000" />
<rect x="73" y="706" width="3" height="1" fill="#000" />
<rect x="73" y="702" width="3" height="1" fill="#000" />
<rect x="73" y="698" width="3" height="1" fill="#000" />
<rect x="68" y="693" width="8" height="1" fill="#000" />
<rect x="73" y="689" width="3" height="1" fill="#000" />
<rect x="73" y="685" width="3" height="1" fill="#000" />
<rect x="73" y="680" width="3" height="1" fill="#000" />
<rect x="73" y="676" width="3" height="1" fill="#000" />
<rect x="68" y="672" width="8" height="1" fill="#000" />
<rect x="73" y="668" width="3" height="1" fill="#000" />
<rect x="73" y="663" width="3" height="1" fill="#000" />
<rect x="73" y="659" width="3" height="1" fill="#000" />
<rect x="73" y="655" width="3" height="1" fill="#000" />
<rect x="68" y="650" width="8" height="1" fill="#000" />
<rect x="73" y="646" width="3" height="1" fill="#000" />
<rect x="73" y="642" width="3" height="1" fill="#000" />
<rect x="73" y="638" width="3" height="1" fill="#000" />
<rect x="73" y="633" width="3" height="1" fill="#000" />
<rect x="68" y="629" width="8" height="1" fill="#000" />
<rect x="73" y="625" width="3" height="1" fill="#000" />
<rect x="73" y="620" width="3" height="1" fill="#000" />
<rect x="73" y="616" width="3" height="1" fill="#000" />
<rect x="73" y="612" width="3" height="1" fill="#000" />
<rect x="68" y="607" width="8" height="1" fill="#000" />
<rect x="82" y="718" width="1" height="4" fill="#000" />
<rect x="93" y="718" width="1" height="9" fill="#000" />
<rect x="104" y="718" width="1" height="4" fill="#000" />
<rect x="116" y="718" width="1" height="4" fill="#000" />
<rect x="127" y="718" width="1" height="4" fill="#000" />
<rect x="138" y="718" width="1" height="4" fill="#000" />
<rect x="149" y="718" width="1" height="9" fill="#000" />
<rect x="161" y="718" width="1" height="4" fill="#000" />
<rect x="172" y="718" width="1" height="4" fill="#000" />
<rect x="183" y="718" width="1" height="4" fill="#000" />
<rect x="195" y="718" width="1" height="4" fill="#000" />
<rect x="206" y="718" width="1" height="9" fill="#000" />
<rect x="217" y="718" width="1" height="4" fill="#000" />
<rect x="229" y="718" width="1" height="4" fill="#000" />
<rect x="240" y="718" width="1" height="4" fill="#000" />
<rect x="251" y="718" width="1" height="4" fill="#000" />
<rect x="262" y="718" width="1" height="9" fill="#000" />
<rect x="274" y="718" width="1" height="4" fill="#000" />
<rect x="285" y="718" width="1" height="4" fill="#000" />
<rect x="296" y="718" width="1" height="4" fill="#000" />
<rect x="308" y="718" width="1" height="4" fill="#000" />
<rect x="319" y="718" width="1" height="9" fill="#000" />
<rect x="330" y="718" width="1" height="4" fill="#000" />
<rect x="342" y="718" width="1" height="4" fill="#000" />
<rect x="353" y="718" width="1" height="4" fill="#000" />
<rect x="364" y="718" width="1" height="4" fill="#000" />
<rect x="376" y="718" width="1" height="9" fill="#000" />
<rect x="387" y="718" width="1" height="4" fill="#000" />
<rect x="398" y="718" width="1" height="4" fill="#000" />
<rect x="409" y="718" width="1" height="4" fill="#000" />
<rect x="421" y="718" width="1" height="4" fill="#000" />
<rect x="432" y="718" width="1" height="9" fill="#000" />
<rect x="443" y="718" width="1" height="4" fill="#000" />
<rect x="455" y="718" width="1" height="4" fill="#000" />
<rect x="466" y="718" width="1" height="4" fill="#000" />
<rect x="477" y="718" width="1" height="4" fill="#000" />
<rect x="489" y="718" width="1" height="9" fill="#000" />
<clipPath id="cp2"><rect x="6" y="605" width="484.8" height="160"/></clipPath><g clip-path="url(#cp2)">
<text x="61.5" y="719.5" fill="#8e8e8e" font-size="12" text-anchor="end" textLength="17.5" lengthAdjust="spacing" >0.0</text>
<text x="61.5" y="697.5" fill="#8e8e8e" font-size="12" text-anchor="end" textLength="17.5" lengthAdjust="spacing" >1.0</text>
<text x="61.5" y="676.5" fill="#8e8e8e" font-size="12" text-anchor="end" textLength="17.5" lengthAdjust="spacing" >2.0</text>
<text x="61.5" y="654.5" fill="#8e8e8e" font-size="12" text-anchor="end" textLength="17.5" lengthAdjust="spacing" >3.0</text>
<text x="61.5" y="633.5" fill="#8e8e8e" font-size="12" text-anchor="end" textLength="17.5" lengthAdjust="spacing" >4.0</text>
<text x="61.5" y="611.5" fill="#8e8e8e" font-size="12" text-anchor="end" textLength="17.5" lengthAdjust="spacing" >5.0</text>
<text x="92.7" y="738.8" fill="#b8123a" font-size="12" text-anchor="middle" textLength="30.5" lengthAdjust="spacing" >0.500</text>
<text x="148.7" y="738.8" fill="#b8123a" font-size="12" text-anchor="middle" textLength="30.5" lengthAdjust="spacing" >0.600</text>
<text x="205.7" y="738.8" fill="#b8123a" font-size="12" text-anchor="middle" textLength="30.5" lengthAdjust="spacing" >0.700</text>
<text x="261.7" y="738.8" fill="#b8123a" font-size="12" text-anchor="middle" textLength="30.5" lengthAdjust="spacing" >0.800</text>
<text x="318.7" y="738.8" fill="#b8123a" font-size="12" text-anchor="middle" textLength="30.5" lengthAdjust="spacing" >0.900</text>
<text x="375.7" y="738.8" fill="#b8123a" font-size="12" text-anchor="middle" textLength="30.5" lengthAdjust="spacing" >1.000</text>
<text x="431.7" y="738.8" fill="#b8123a" font-size="12" text-anchor="middle" textLength="30.5" lengthAdjust="spacing" >1.100</text>
<text x="488.7" y="738.8" fill="#b8123a" font-size="12" text-anchor="middle" textLength="30.5" lengthAdjust="spacing" >1.200</text>
</g>
<rect x="263" y="606" width="1" height="111" fill="#000" />
<rect x="68" y="715" width="422" height="1" fill="#000" />
<text x="25.5" y="743.7" fill="#b8123a" font-size="12" text-anchor="start" textLength="31" lengthAdjust="spacing" >0.800</text>
<text x="25.5" y="757.8" fill="#8e8e8e" font-size="12" text-anchor="start" textLength="16.5" lengthAdjust="spacing" >0.0</text>
<text x="250" y="757.8" fill="#b8123a" font-size="12" text-anchor="start" textLength="69" lengthAdjust="spacing" >LZA08a_U21</text>
<text transform="translate(26.4,662) rotate(-90)" fill="#8e8e8e" font-size="12" text-anchor="middle" textLength="47" lengthAdjust="spacing">LamError</text>
<path d="M140 794h1v1h-1zM142 794h1v1h-1zM143 794h1v1h-1zM146 794h1v1h-1zM147 794h1v1h-1zM148 794h1v1h-1zM151 794h1v1h-1zM152 794h1v1h-1zM144 797h1v1h-1zM147 797h1v1h-1zM148 797h1v1h-1zM150 797h1v1h-1zM144 801h1v1h-1zM146 801h1v1h-1zM148 801h1v1h-1zM145 805h1v1h-1zM146 808h1v1h-1zM147 794h1v1h-1zM149 794h1v1h-1zM153 794h1v1h-1zM151 797h1v1h-1zM152 797h1v1h-1zM159 794h1v1h-1zM161 794h1v1h-1zM154 797h1v1h-1zM162 797h1v1h-1zM155 801h1v1h-1zM156 801h1v1h-1zM158 801h1v1h-1zM160 801h1v1h-1zM161 801h1v1h-1zM156 805h1v1h-1zM158 805h1v1h-1zM160 805h1v1h-1zM158 808h1v1h-1zM163 797h1v1h-1zM168 797h1v1h-1zM174 794h1v1h-1zM372 794h1v1h-1zM377 794h1v1h-1zM378 797h1v1h-1zM385 794h1v1h-1zM384 797h1v1h-1zM390 794h1v1h-1zM391 794h1v1h-1zM390 797h1v1h-1zM396 794h1v1h-1zM300 794h1v1h-1zM340 794h1v1h-1zM149 790h3v1h-3zM157 790h2v1h-2zM179 790h2v1h-2zM199 790h3v1h-3zM227 790h2v1h-2zM275 790h3v1h-3zM282 790h3v1h-3zM291 790h2v1h-2zM295 790h2v1h-2zM315 790h1v1h-1zM325 790h2v1h-2zM329 790h1v1h-1zM342 790h3v1h-3zM372 790h3v1h-3zM379 790h2v1h-2zM389 790h2v1h-2zM397 790h1v1h-1zM144 794h2v1h-2zM147 794h2v1h-2zM169 794h1v1h-1zM237 794h2v1h-2zM279 794h1v1h-1zM328 794h3v1h-3zM335 794h1v1h-1zM358 794h1v1h-1zM376 794h1v1h-1zM379 794h2v1h-2zM383 794h2v1h-2zM395 794h2v1h-2z" fill="#38b4e4" shape-rendering="crispEdges"/>
<path d="M145 797h1v1h-1zM145 801h1v1h-1zM149 801h1v1h-1zM147 805h1v1h-1zM148 805h1v1h-1zM150 801h1v1h-1zM153 794h1v1h-1zM154 794h1v1h-1zM157 794h1v1h-1zM158 794h1v1h-1zM157 797h1v1h-1zM159 801h1v1h-1zM166 794h1v1h-1zM379 794h1v1h-1zM380 794h1v1h-1zM382 794h1v1h-1zM386 794h1v1h-1zM388 794h1v1h-1zM392 794h1v1h-1zM320 794h1v1h-1zM153 790h1v1h-1zM166 790h2v1h-2zM170 790h1v1h-1zM194 790h3v1h-3zM203 790h2v1h-2zM236 790h1v1h-1zM239 790h2v1h-2zM248 790h1v1h-1zM251 790h3v1h-3zM262 790h3v1h-3zM288 790h2v1h-2zM298 790h3v1h-3zM317 790h3v1h-3zM346 790h3v1h-3zM377 790h1v1h-1zM154 794h1v1h-1zM156 794h1v1h-1zM158 794h2v1h-2zM166 794h2v1h-2zM173 794h1v1h-1z" fill="#2a6ad0" shape-rendering="crispEdges"/>
<path d="M145 790h3v1h-3zM155 790h1v1h-1zM160 790h2v1h-2zM163 790h1v1h-1zM172 790h2v1h-2zM175 790h2v1h-2zM184 790h1v1h-1zM190 790h1v1h-1zM192 790h1v1h-1zM206 790h3v1h-3zM212 790h3v1h-3zM216 790h2v1h-2zM222 790h1v1h-1zM224 790h2v1h-2zM230 790h2v1h-2zM242 790h1v1h-1zM245 790h2v1h-2zM256 790h2v1h-2zM259 790h1v1h-1zM266 790h2v1h-2zM279 790h2v1h-2zM302 790h1v1h-1zM304 790h2v1h-2zM307 790h1v1h-1zM309 790h2v1h-2zM312 790h2v1h-2zM321 790h1v1h-1zM323 790h1v1h-1zM338 790h3v1h-3zM350 790h3v1h-3zM354 790h1v1h-1zM356 790h1v1h-1zM359 790h3v1h-3zM365 790h2v1h-2zM368 790h3v1h-3zM382 790h1v1h-1zM384 790h2v1h-2zM387 790h1v1h-1zM393 790h1v1h-1zM395 790h1v1h-1zM399 790h1v1h-1zM151 794h2v1h-2zM162 794h1v1h-1zM230 794h3v1h-3zM270 794h3v1h-3zM297 794h3v1h-3zM314 794h2v1h-2zM323 794h1v1h-1zM340 794h2v1h-2zM360 794h1v1h-1zM372 794h3v1h-3z" fill="#14148c" shape-rendering="crispEdges"/>
<path d="M182 790h1v1h-1zM186 790h3v1h-3zM210 790h1v1h-1zM220 790h1v1h-1zM233 790h2v1h-2zM270 790h3v1h-3zM331 790h3v1h-3zM336 790h1v1h-1zM235 794h1v1h-1zM282 794h1v1h-1zM294 794h2v1h-2zM317 794h1v1h-1zM319 794h3v1h-3zM332 794h1v1h-1zM365 794h2v1h-2zM368 794h2v1h-2zM398 794h2v1h-2z" fill="#a82038" shape-rendering="crispEdges"/>
<path d="M240 794h3v1h-3zM245 794h2v1h-2zM255 794h2v1h-2zM276 794h2v1h-2zM285 794h3v1h-3zM289 794h2v1h-2zM307 794h2v1h-2zM337 794h2v1h-2zM354 794h1v1h-1zM387 794h2v1h-2zM391 794h3v1h-3z" fill="#3a3ab0" shape-rendering="crispEdges"/>
<path d="M322 785h2v1h-2z" fill="#f0a030" shape-rendering="crispEdges"/>
<rect x="76.5" y="784.5" width="414" height="111" fill="none" stroke="#000" stroke-width="1" />
<rect x="68" y="893" width="8" height="1" fill="#000" />
<rect x="73" y="889" width="3" height="1" fill="#000" />
<rect x="73" y="884" width="3" height="1" fill="#000" />
<rect x="73" y="880" width="3" height="1" fill="#000" />
<rect x="73" y="876" width="3" height="1" fill="#000" />
<rect x="68" y="872" width="8" height="1" fill="#000" />
<rect x="73" y="867" width="3" height="1" fill="#000" />
<rect x="73" y="863" width="3" height="1" fill="#000" />
<rect x="73" y="859" width="3" height="1" fill="#000" />
<rect x="73" y="854" width="3" height="1" fill="#000" />
<rect x="68" y="850" width="8" height="1" fill="#000" />
<rect x="73" y="846" width="3" height="1" fill="#000" />
<rect x="73" y="842" width="3" height="1" fill="#000" />
<rect x="73" y="837" width="3" height="1" fill="#000" />
<rect x="73" y="833" width="3" height="1" fill="#000" />
<rect x="68" y="829" width="8" height="1" fill="#000" />
<rect x="73" y="825" width="3" height="1" fill="#000" />
<rect x="73" y="820" width="3" height="1" fill="#000" />
<rect x="73" y="816" width="3" height="1" fill="#000" />
<rect x="73" y="812" width="3" height="1" fill="#000" />
<rect x="68" y="807" width="8" height="1" fill="#000" />
<rect x="73" y="803" width="3" height="1" fill="#000" />
<rect x="73" y="799" width="3" height="1" fill="#000" />
<rect x="73" y="795" width="3" height="1" fill="#000" />
<rect x="73" y="790" width="3" height="1" fill="#000" />
<rect x="68" y="786" width="8" height="1" fill="#000" />
<rect x="82" y="896" width="1" height="4" fill="#000" />
<rect x="94" y="896" width="1" height="9" fill="#000" />
<rect x="106" y="896" width="1" height="4" fill="#000" />
<rect x="119" y="896" width="1" height="4" fill="#000" />
<rect x="131" y="896" width="1" height="4" fill="#000" />
<rect x="143" y="896" width="1" height="4" fill="#000" />
<rect x="155" y="896" width="1" height="9" fill="#000" />
<rect x="167" y="896" width="1" height="4" fill="#000" />
<rect x="179" y="896" width="1" height="4" fill="#000" />
<rect x="191" y="896" width="1" height="4" fill="#000" />
<rect x="204" y="896" width="1" height="4" fill="#000" />
<rect x="216" y="896" width="1" height="9" fill="#000" />
<rect x="228" y="896" width="1" height="4" fill="#000" />
<rect x="240" y="896" width="1" height="4" fill="#000" />
<rect x="252" y="896" width="1" height="4" fill="#000" />
<rect x="264" y="896" width="1" height="4" fill="#000" />
<rect x="277" y="896" width="1" height="9" fill="#000" />
<rect x="289" y="896" width="1" height="4" fill="#000" />
<rect x="301" y="896" width="1" height="4" fill="#000" />
<rect x="313" y="896" width="1" height="4" fill="#000" />
<rect x="325" y="896" width="1" height="4" fill="#000" />
<rect x="337" y="896" width="1" height="9" fill="#000" />
<rect x="350" y="896" width="1" height="4" fill="#000" />
<rect x="362" y="896" width="1" height="4" fill="#000" />
<rect x="374" y="896" width="1" height="4" fill="#000" />
<rect x="386" y="896" width="1" height="4" fill="#000" />
<rect x="398" y="896" width="1" height="9" fill="#000" />
<rect x="410" y="896" width="1" height="4" fill="#000" />
<rect x="423" y="896" width="1" height="4" fill="#000" />
<rect x="435" y="896" width="1" height="4" fill="#000" />
<rect x="447" y="896" width="1" height="4" fill="#000" />
<rect x="459" y="896" width="1" height="9" fill="#000" />
<rect x="471" y="896" width="1" height="4" fill="#000" />
<rect x="483" y="896" width="1" height="4" fill="#000" />
<clipPath id="cp3"><rect x="6" y="784" width="486" height="160"/></clipPath><g clip-path="url(#cp3)">
<text x="61.5" y="897.5" fill="#8e8e8e" font-size="12" text-anchor="end" textLength="21.7" lengthAdjust="spacing" >-5.0</text>
<text x="61.5" y="876.5" fill="#8e8e8e" font-size="12" text-anchor="end" textLength="21.7" lengthAdjust="spacing" >-4.0</text>
<text x="61.5" y="854.5" fill="#8e8e8e" font-size="12" text-anchor="end" textLength="21.7" lengthAdjust="spacing" >-3.0</text>
<text x="61.5" y="833.5" fill="#8e8e8e" font-size="12" text-anchor="end" textLength="21.7" lengthAdjust="spacing" >-2.0</text>
<text x="61.5" y="811.5" fill="#8e8e8e" font-size="12" text-anchor="end" textLength="21.7" lengthAdjust="spacing" >-1.0</text>
<text x="61.5" y="790.5" fill="#8e8e8e" font-size="12" text-anchor="end" textLength="17.5" lengthAdjust="spacing" >0.0</text>
<text x="93.7" y="916.5" fill="#b8123a" font-size="12" text-anchor="middle" textLength="30.5" lengthAdjust="spacing" >0.500</text>
<text x="154.7" y="916.5" fill="#b8123a" font-size="12" text-anchor="middle" textLength="30.5" lengthAdjust="spacing" >0.600</text>
<text x="215.7" y="916.5" fill="#b8123a" font-size="12" text-anchor="middle" textLength="30.5" lengthAdjust="spacing" >0.700</text>
<text x="276.7" y="916.5" fill="#b8123a" font-size="12" text-anchor="middle" textLength="30.5" lengthAdjust="spacing" >0.800</text>
<text x="336.7" y="916.5" fill="#b8123a" font-size="12" text-anchor="middle" textLength="30.5" lengthAdjust="spacing" >0.900</text>
<text x="397.7" y="916.5" fill="#b8123a" font-size="12" text-anchor="middle" textLength="30.5" lengthAdjust="spacing" >1.000</text>
<text x="458.7" y="916.5" fill="#b8123a" font-size="12" text-anchor="middle" textLength="30.5" lengthAdjust="spacing" >1.100</text>
</g>
<rect x="276" y="785" width="1" height="110" fill="#000" />
<rect x="68" y="786" width="422" height="1" fill="#000" />
<text x="25.5" y="921.8" fill="#b8123a" font-size="12" text-anchor="start" textLength="31" lengthAdjust="spacing" >0.800</text>
<text x="25.5" y="935.5" fill="#8e8e8e" font-size="12" text-anchor="start" textLength="16.5" lengthAdjust="spacing" >0.0</text>
<text x="250" y="935.5" fill="#b8123a" font-size="12" text-anchor="start" textLength="69" lengthAdjust="spacing" >LZA08a_U21</text>
<text transform="translate(26.4,840) rotate(-90)" fill="#8e8e8e" font-size="12" text-anchor="middle" textLength="47" lengthAdjust="spacing">LamError</text>
<path d="M574 669L574 667L575 666.4L578 665.2L581 664.0L584 662.7L587 661.5L590 660.3L593 659.0L596 657.8L599 656.6L602 655.4L605 654.2L608 653.0L611 651.8L614 650.6L617 649.4L620 648.2L623 647.0L626 645.8L629 644.6L632 643.4L635 642.2L638 641.0L641 639.8L644 638.6L647 637.4L650 636.2L653 635.0L656 633.7L659 632.3L662 631.0L665 629.6L668 628.3L671 626.9L674 625.6L677 624.2L680 622.9L683 621.5L686 620.2L689 618.8L692 617.5L695 616.1L698 614.7L701 613.4L704 612.0L707 610.7L710 609.4L713 608.1L716 606.8L719 605.5L722 604.2L725 602.9L728 601.6L731 600.3L734 599.1L737 597.6L740 595.7L743 593.9L746 592.0L749 590.1L752 588.3L755 586.4L758 584.6L761 582.7L764 580.9L767 579.4L770 577.9L773 576.4L776 574.9L779 573.4L782 571.9L785 570.4L788 568.9L791 567.4L794 565.7L797 564.1L800 562.4L803 560.8L806 559.1L809 557.5L812 555.8L815 554.2L818 552.5L821 550.6L824 548.5L827 546.4L830 544.3L833 542.2L836 540.1L839 538.0L842 535.9L845 533.8L848 531.8L851 529.8L854 527.9L857 525.9L860 524.0L863 522.0L866 520.1L869 518.1L872 516.2L875 514.2L878 512.1L881 510.0L884 507.9L887 505.8L890 503.7L893 501.6L896 499.5L899 497.4L902 495.3L905 493.8L908 492.3L911 490.8L914 489.3L917 487.8L920 486.3L923 484.8L926 483.3L929 481.8L932 479.7L935 477.4L938 475.2L941 472.9L944 470.7L947 468.4L950 466.2L953 463.9L956 461.7L959 459.5L962 457.4L965 455.3L968 453.2L971 451.2L974 449.1L977 447.0L980 444.9L983 442.8L986 439.9L989 435.3L992 430.7L995 427.9L998 425.3L1001 422.8L1004 420.2L1007 417.7L1010 415.1L1013 412.5L1016 409.7L1019 406.9L1022 404.0L1025 401.2L1028 398.4L1031 395.5L1034 392.7L1037 389.8L1040 387.0L1043 384.1L1046 381.3L1049 378.5L1052 375.6L1055 372.8L1058 370.3L1061 367.9L1064 365.5L1067 363.1L1070 360.7L1073 358.3L1076 355.9L1079 353.5L1082 351.1L1085 348.7L1088 346.3L1091 343.8L1094 341.4L1097 339.0L1100 336.6L1103 334.2L1106 331.8L1109 329.3L1112 326.5L1115 323.6L1118 320.8L1121 317.9L1124 315.0L1127 312.2L1130 309.4L1133 307.1L1136 304.8L1139 302.5L1142 300.2L1145 297.9L1148 295.6L1151 293.3L1154 291.0L1157 288.7L1160 286.4L1163 284.1L1166 281.9L1169 279.7L1172 277.4L1175 275.2L1178 273.0L1181 270.7L1184 268.5L1187 266.4L1190 264.3L1193 262.2L1196 260.1L1199 258.0L1202 255.9L1205 253.8L1208 251.6L1211 249.4L1214 247.2L1217 245.0L1220 242.7L1223 240.8L1226 238.8L1229 236.9L1232 234.9L1235 233.0L1238 231.0L1241 229.0L1244 226.9L1247 224.8L1250 222.7L1253 220.6L1256 218.5L1259 216.4L1262 214.3L1265 212.0L1268 209.8L1271 207.6L1274 205.3L1277 203.1L1280 200.8L1283 198.3L1286 195.8L1289 193.2L1292 190.6L1295 188.1L1298 185.5L1301 182.9L1304 180.5L1307 178.2L1310 175.8L1313 173.4L1316 171.0L1319 168.6L1322 166.3L1325 164.0L1328 161.8L1331 159.5L1334 157.3L1337 155.0L1340 152.8L1343 150.5L1346 148.1L1349 145.6L1352 143.2L1355 140.8L1358 138.4L1361 136.0L1364 133.4L1367 130.7L1370 128.0L1373 125.3L1376 122.6L1379 119.9L1382 117.2L1385 115.0L1388 112.7L1391 110.5L1394 108.2L1397 105.9L1400 103.7L1403 101.2L1406 98.5L1409 95.9L1412 93.2L1415 90.5L1418 87.8L1421 85.1L1424 82.4L1427 79.7L1430 77.0L1433 74.2L1436 71.5L1439 68.8L1442 66.1L1445 64.7L1448 63.3L1451 61.9L1454 61L1454 669Z" fill="#eef0fb"/>
<path d="M574 667H578V667H581V665H584V664H590V662H598V659H602V655H608V653H614V652H621V647H629V646H634V643H641V639H646V637H649V636H657V635H660V633H668V629H674V625H681V623H687V621H694V617H699V615H707V611H713V609H716V608H723V603H727V603H730V601H738V599H744V595H752V589H757V586H764V582H771V579H778V573H784V571H792V568H798V564H803V562H811V557H814V556H822V552H825V548H832V545H837V541H845V533H851V529H856V528H863V524H869V519H873V517H877V512H881V512H888V506H894V503H899V499H904V496H909V493H916V488H922V487H926V485H933V480H939V474H945V471H952V466H956V463H962V459H967V456H972V450H979V447H986V441H991V434H998V425H1002V423H1009V418H1013V412H1020V407H1023V403H1026V400H1032V394H1037V390H1042V385H1049V379H1054V374H1057V372H1061V368H1068V363H1076V356H1084V350H1090V345H1096V341H1099V337H1104V335H1109V331H1113V326H1116V323H1124V317H1128V313H1134V306H1138V303H1144V299H1147V297H1153V293H1161V287H1168V281H1176V276H1182V271H1189V265H1195V262H1200V259H1203V256H1207V253H1210V251H1213V247H1218V245H1226V239H1232V237H1237V232H1240V231H1243V229H1247V226H1253V221H1261V217H1268V209H1274V206H1279V201H1283V200H1291V193H1298V186H1304V180H1312V176H1317V172H1323V165H1328V163H1334V158H1337V156H1341V153H1348V147H1353V144H1357V140H1365V132H1371V129H1376V124H1382V119H1386V114H1394V108H1397V107H1401V104H1408V97H1413V93H1420V88H1425V82H1430V78H1433V75H1437V72H1445V66H1449V64H1453V61" fill="none" stroke="#d01030" stroke-width="1" shape-rendering="crispEdges"/>
<path d="M574 665H576V663H578V664H581V662H585V661H591V657H597V656H602V655H608V651H614V650H620V647H622V645H626V645H630V644H635V641H641V638H644V637H646V636H650V635H653V633H659V631H664V629H670V626H676V623H680V622H683V621H688V618H693V615H698V613H703V612H707V610H712V607H716V605H722V603H727V600H731V600H735V597H740V594H746V589H750V587H753V585H755V584H759V582H761V581H765V579H768V576H773V574H775V574H779V572H782V569H784V568H786V567H788V566H792V565H795V564H798V561H803V558H806V558H808V555H812V553H816V552H821V548H825V547H831V541H835V540H841V535H846V532H848V530H850V528H855V526H861V523H866V518H869V517H873V514H879V511H881V508H883V507H885V506H888V504H890V503H893V499H896V498H901V493H905V491H911V489H917V486H921V485H925V481H928V480H933V478H936V474H942V470H945V467H947V466H950V465H952V463H954V463H959V458H965V455H968V452H973V449H979V443H985V439H990V432H992V430H996V424H1002V419H1008V415H1012V412H1016V407H1021V402H1023V402H1026V398H1031V393H1036V390H1041V384H1047V378H1049V377H1051V375H1055V370H1058V370H1061V365H1067V361H1072V358H1075V355H1080V350H1084V347H1086V345H1092V341H1097V337H1099V335H1105V332H1107V330H1111V326H1116V321H1120V317H1125V313H1130V309H1134V306H1137V302H1142V299H1148V295H1150V291H1152V291H1155V289H1160V284H1162V282H1165V281H1170V277H1174V275H1177V272H1179V271H1185V267H1187V265H1193V261H1199V256H1202V254H1207V251H1212V247H1218V243H1223V240H1225V239H1228V237H1234V231H1239V229H1244V225H1249V223H1253V219H1255V218H1261V213H1266V211H1268V208H1273V205H1276V201H1278V202H1281V199H1284V195H1289V192H1293V188H1298V184H1300V183H1305V178H1311V173H1316V169H1318V168H1320V167H1326V161H1332V158H1336V155H1340V152H1342V149H1348V145H1351V143H1355V139H1357V138H1362V135H1367V129H1370V125H1374V124H1376V121H1378V120H1384V115H1387V112H1392V108H1397V104H1399V103H1403V100H1407V96H1412V91H1418V86H1423V82H1429V75H1433V72H1436V71H1442V64H1448V62H1450V60H1452V61H1453V59" fill="none" stroke="#10b010" stroke-width="1.5" shape-rendering="crispEdges"/>
<path d="M574 667H577V667H583V664H587V663H592V661H594V660H596V658H600V658H603V655H610V653H616V651H621V648H628V645H631V644H637V642H644V638H651V635H654V636H656V634H658V633H663V632H670V628H677V625H682V623H687V620H691V617H693V617H698V615H702V613H709V610H714V609H719V607H723V605H729V602H735V599H739V596H743V595H750V590H757V586H763V583H769V578H776V575H783V573H787V570H789V568H794V566H796V565H798V564H801V561H805V560H810V556H812V557H818V552H823V551H827V548H831V545H834V541H838V538H840V537H846V535H848V532H853V529H859V525H862V522H866V521H870V518H875V515H880V512H885V509H892V504H894V503H900V497H905V494H909V492H913V491H917V489H921V485H926V485H930V481H935V479H941V474H943V472H948V468H955V463H961V459H968V454H970V454H972V450H976V448H983V443H987V441H993V431H996V428H999V425H1003V423H1007V419H1012V413H1014V414H1021V406H1025V403H1028V399H1031V396H1034V394H1041V386H1043V386H1047V381H1054V375H1059V370H1061V369H1068V363H1074V358H1078V355H1080V352H1086V349H1090V346H1093V343H1097V339H1103V335H1109V330H1114V326H1120V320H1125V315H1132V309H1136V306H1142V301H1144V299H1147V297H1149V296H1155V292H1160V288H1167V282H1169V280H1176V276H1180V273H1184V269H1186V269H1190V264H1193V262H1195V263H1198V259H1204V254H1206V254H1213V248H1216V247H1220V243H1227V238H1233V236H1238V231H1244V227H1248V225H1252V223H1257V218H1261V216H1264V213H1270V208H1273V207H1277V204H1279V202H1286V198H1291V191H1295V189H1299V186H1305V182H1310V176H1315V173H1317V170H1320V168H1322V166H1324V166H1326V163H1332V161H1337V156H1340V154H1342V152H1347V148H1353V143H1357V140H1360V138H1365V132H1368V132H1370V129H1372V128H1375V123H1379V121H1385V117H1390V111H1396V107H1398V106H1405V100H1412V94H1417V90H1422V84H1425V82H1431V77H1438V72H1440V69H1443V66H1446V64H1450V63H1453V61" fill="none" stroke="#1030d8" stroke-width="1.5" shape-rendering="crispEdges"/>
<path d="M580 663h5v3h-5zM604 654h4v3h-4zM625 645h4v3h-4zM665 629h3v3h-3zM688 618h6v3h-6zM719 605h7v3h-7zM740 595h4v3h-4zM771 576h7v3h-7zM785 569h5v3h-5zM799 562h6v3h-6zM818 552h4v3h-4zM848 531h6v3h-6zM867 518h5v3h-5zM891 502h3v3h-3zM907 492h7v3h-7zM945 469h5v3h-5zM976 447h6v3h-6zM996 426h4v3h-4zM1016 409h3v3h-3zM1032 394h4v3h-4zM1068 361h7v3h-7zM1096 339h7v3h-7zM1132 307h7v3h-7zM1148 295h3v3h-3zM1188 265h4v3h-4zM1225 238h5v3h-5zM1241 228h3v3h-3zM1273 205h6v3h-6zM1313 172h3v3h-3zM1352 142h7v3h-7zM1369 128h5v3h-5zM1397 105h7v3h-7zM1414 90h5v3h-5zM1444 64h3v3h-3z" fill="#1030d8" shape-rendering="crispEdges"/>
<rect x="573.0" y="60.0" width="882" height="610" fill="none" stroke="#000" stroke-width="2" />
<rect x="565" y="667" width="7" height="1" fill="#000" />
<rect x="570" y="662" width="2" height="1" fill="#000" />
<rect x="570" y="656" width="2" height="1" fill="#000" />
<rect x="570" y="650" width="2" height="1" fill="#000" />
<rect x="570" y="644" width="2" height="1" fill="#000" />
<rect x="565" y="639" width="7" height="1" fill="#000" />
<rect x="570" y="633" width="2" height="1" fill="#000" />
<rect x="570" y="627" width="2" height="1" fill="#000" />
<rect x="570" y="621" width="2" height="1" fill="#000" />
<rect x="570" y="616" width="2" height="1" fill="#000" />
<rect x="565" y="610" width="7" height="1" fill="#000" />
<rect x="570" y="604" width="2" height="1" fill="#000" />
<rect x="570" y="598" width="2" height="1" fill="#000" />
<rect x="570" y="592" width="2" height="1" fill="#000" />
<rect x="570" y="587" width="2" height="1" fill="#000" />
<rect x="565" y="581" width="7" height="1" fill="#000" />
<rect x="570" y="575" width="2" height="1" fill="#000" />
<rect x="570" y="569" width="2" height="1" fill="#000" />
<rect x="570" y="564" width="2" height="1" fill="#000" />
<rect x="570" y="558" width="2" height="1" fill="#000" />
<rect x="565" y="552" width="7" height="1" fill="#000" />
<rect x="570" y="546" width="2" height="1" fill="#000" />
<rect x="570" y="541" width="2" height="1" fill="#000" />
<rect x="570" y="535" width="2" height="1" fill="#000" />
<rect x="570" y="529" width="2" height="1" fill="#000" />
<rect x="565" y="523" width="7" height="1" fill="#000" />
<rect x="570" y="518" width="2" height="1" fill="#000" />
<rect x="570" y="512" width="2" height="1" fill="#000" />
<rect x="570" y="506" width="2" height="1" fill="#000" />
<rect x="570" y="500" width="2" height="1" fill="#000" />
<rect x="565" y="495" width="7" height="1" fill="#000" />
<rect x="570" y="489" width="2" height="1" fill="#000" />
<rect x="570" y="483" width="2" height="1" fill="#000" />
<rect x="570" y="477" width="2" height="1" fill="#000" />
<rect x="570" y="471" width="2" height="1" fill="#000" />
<rect x="565" y="466" width="7" height="1" fill="#000" />
<rect x="570" y="460" width="2" height="1" fill="#000" />
<rect x="570" y="454" width="2" height="1" fill="#000" />
<rect x="570" y="448" width="2" height="1" fill="#000" />
<rect x="570" y="443" width="2" height="1" fill="#000" />
<rect x="565" y="437" width="7" height="1" fill="#000" />
<rect x="570" y="431" width="2" height="1" fill="#000" />
<rect x="570" y="425" width="2" height="1" fill="#000" />
<rect x="570" y="420" width="2" height="1" fill="#000" />
<rect x="570" y="414" width="2" height="1" fill="#000" />
<rect x="565" y="408" width="7" height="1" fill="#000" />
<rect x="570" y="402" width="2" height="1" fill="#000" />
<rect x="570" y="397" width="2" height="1" fill="#000" />
<rect x="570" y="391" width="2" height="1" fill="#000" />
<rect x="570" y="385" width="2" height="1" fill="#000" />
<rect x="565" y="379" width="7" height="1" fill="#000" />
<rect x="570" y="374" width="2" height="1" fill="#000" />
<rect x="570" y="368" width="2" height="1" fill="#000" />
<rect x="570" y="362" width="2" height="1" fill="#000" />
<rect x="570" y="356" width="2" height="1" fill="#000" />
<rect x="565" y="350" width="7" height="1" fill="#000" />
<rect x="570" y="345" width="2" height="1" fill="#000" />
<rect x="570" y="339" width="2" height="1" fill="#000" />
<rect x="570" y="333" width="2" height="1" fill="#000" />
<rect x="570" y="327" width="2" height="1" fill="#000" />
<rect x="565" y="322" width="7" height="1" fill="#000" />
<rect x="570" y="316" width="2" height="1" fill="#000" />
<rect x="570" y="310" width="2" height="1" fill="#000" />
<rect x="570" y="304" width="2" height="1" fill="#000" />
<rect x="570" y="299" width="2" height="1" fill="#000" />
<rect x="565" y="293" width="7" height="1" fill="#000" />
<rect x="570" y="287" width="2" height="1" fill="#000" />
<rect x="570" y="281" width="2" height="1" fill="#000" />
<rect x="570" y="276" width="2" height="1" fill="#000" />
<rect x="570" y="270" width="2" height="1" fill="#000" />
<rect x="565" y="264" width="7" height="1" fill="#000" />
<rect x="570" y="258" width="2" height="1" fill="#000" />
<rect x="570" y="252" width="2" height="1" fill="#000" />
<rect x="570" y="247" width="2" height="1" fill="#000" />
<rect x="570" y="241" width="2" height="1" fill="#000" />
<rect x="565" y="235" width="7" height="1" fill="#000" />
<rect x="570" y="229" width="2" height="1" fill="#000" />
<rect x="570" y="224" width="2" height="1" fill="#000" />
<rect x="570" y="218" width="2" height="1" fill="#000" />
<rect x="570" y="212" width="2" height="1" fill="#000" />
<rect x="565" y="206" width="7" height="1" fill="#000" />
<rect x="570" y="201" width="2" height="1" fill="#000" />
<rect x="570" y="195" width="2" height="1" fill="#000" />
<rect x="570" y="189" width="2" height="1" fill="#000" />
<rect x="570" y="183" width="2" height="1" fill="#000" />
<rect x="565" y="178" width="7" height="1" fill="#000" />
<rect x="570" y="172" width="2" height="1" fill="#000" />
<rect x="570" y="166" width="2" height="1" fill="#000" />
<rect x="570" y="160" width="2" height="1" fill="#000" />
<rect x="570" y="155" width="2" height="1" fill="#000" />
<rect x="565" y="149" width="7" height="1" fill="#000" />
<rect x="570" y="143" width="2" height="1" fill="#000" />
<rect x="570" y="137" width="2" height="1" fill="#000" />
<rect x="570" y="131" width="2" height="1" fill="#000" />
<rect x="570" y="126" width="2" height="1" fill="#000" />
<rect x="565" y="120" width="7" height="1" fill="#000" />
<rect x="570" y="114" width="2" height="1" fill="#000" />
<rect x="570" y="108" width="2" height="1" fill="#000" />
<rect x="570" y="103" width="2" height="1" fill="#000" />
<rect x="570" y="97" width="2" height="1" fill="#000" />
<rect x="565" y="91" width="7" height="1" fill="#000" />
<rect x="570" y="85" width="2" height="1" fill="#000" />
<rect x="570" y="80" width="2" height="1" fill="#000" />
<rect x="570" y="74" width="2" height="1" fill="#000" />
<rect x="570" y="68" width="2" height="1" fill="#000" />
<text x="558.5" y="672" fill="#1834a8" font-size="12" text-anchor="end" textLength="31" lengthAdjust="spacing" >0.580</text>
<text x="558.5" y="644" fill="#1834a8" font-size="12" text-anchor="end" textLength="31" lengthAdjust="spacing" >0.600</text>
<text x="558.5" y="615" fill="#1834a8" font-size="12" text-anchor="end" textLength="31" lengthAdjust="spacing" >0.620</text>
<text x="558.5" y="586" fill="#1834a8" font-size="12" text-anchor="end" textLength="31" lengthAdjust="spacing" >0.640</text>
<text x="558.5" y="557" fill="#1834a8" font-size="12" text-anchor="end" textLength="31" lengthAdjust="spacing" >0.660</text>
<text x="558.5" y="528" fill="#1834a8" font-size="12" text-anchor="end" textLength="31" lengthAdjust="spacing" >0.680</text>
<text x="558.5" y="500" fill="#1834a8" font-size="12" text-anchor="end" textLength="31" lengthAdjust="spacing" >0.700</text>
<text x="558.5" y="471" fill="#1834a8" font-size="12" text-anchor="end" textLength="31" lengthAdjust="spacing" >0.720</text>
<text x="558.5" y="442" fill="#1834a8" font-size="12" text-anchor="end" textLength="31" lengthAdjust="spacing" >0.740</text>
<text x="558.5" y="413" fill="#1834a8" font-size="12" text-anchor="end" textLength="31" lengthAdjust="spacing" >0.760</text>
<text x="558.5" y="384" fill="#1834a8" font-size="12" text-anchor="end" textLength="31" lengthAdjust="spacing" >0.780</text>
<text x="558.5" y="355" fill="#1834a8" font-size="12" text-anchor="end" textLength="31" lengthAdjust="spacing" >0.800</text>
<text x="558.5" y="327" fill="#1834a8" font-size="12" text-anchor="end" textLength="31" lengthAdjust="spacing" >0.820</text>
<text x="558.5" y="298" fill="#1834a8" font-size="12" text-anchor="end" textLength="31" lengthAdjust="spacing" >0.840</text>
<text x="558.5" y="269" fill="#1834a8" font-size="12" text-anchor="end" textLength="31" lengthAdjust="spacing" >0.860</text>
<text x="558.5" y="240" fill="#1834a8" font-size="12" text-anchor="end" textLength="31" lengthAdjust="spacing" >0.880</text>
<text x="558.5" y="211" fill="#1834a8" font-size="12" text-anchor="end" textLength="31" lengthAdjust="spacing" >0.900</text>
<text x="558.5" y="183" fill="#1834a8" font-size="12" text-anchor="end" textLength="31" lengthAdjust="spacing" >0.920</text>
<text x="558.5" y="154" fill="#1834a8" font-size="12" text-anchor="end" textLength="31" lengthAdjust="spacing" >0.940</text>
<text x="558.5" y="125" fill="#1834a8" font-size="12" text-anchor="end" textLength="31" lengthAdjust="spacing" >0.960</text>
<text x="558.5" y="96" fill="#1834a8" font-size="12" text-anchor="end" textLength="31" lengthAdjust="spacing" >0.980</text>
<rect x="564" y="349" width="8" height="2" fill="#0c28b8" />
<rect x="1084" y="61" width="1" height="608" fill="#000" />
<rect x="574" y="350" width="880" height="1" fill="#000" />
<text transform="translate(518,364) rotate(-90)" fill="#1834a8" font-size="12" text-anchor="middle" textLength="92" lengthAdjust="spacing">LabNTKa_U12 (λ)</text>
<path d="M564.5 392.5L572.5 396.7L564.5 401Z" fill="#1030d8" stroke="#101040" stroke-width="0.8"/>
<text x="579" y="400.3" fill="#000" font-size="10" text-anchor="start" textLength="23" lengthAdjust="spacing" >0.768</text>
<path d="M1449.3 58.8L1453.5 51L1457.7 58.8Z" fill="#1030d8" stroke="#101040" stroke-width="0.8"/>
<text x="1422.7" y="58.8" fill="#000" font-size="10" text-anchor="start" textLength="22.3" lengthAdjust="spacing" >1.005</text>
<path d="M574 671L579.2 671L574.3 679.6Z" fill="#1030d8" stroke="#101040" stroke-width="0.6"/>
<text x="582.3" y="678.3" fill="#000" font-size="10" text-anchor="start" textLength="23" lengthAdjust="spacing" >0.580</text>
<rect x="573.5" y="695.5" width="881" height="193" fill="none" stroke="#aaaaaa" stroke-width="1" />
<rect x="565" y="886" width="8" height="1" fill="#aaaaaa" />
<rect x="570" y="883" width="3" height="1" fill="#aaaaaa" />
<rect x="570" y="879" width="3" height="1" fill="#aaaaaa" />
<rect x="570" y="875" width="3" height="1" fill="#aaaaaa" />
<rect x="570" y="871" width="3" height="1" fill="#aaaaaa" />
<rect x="565" y="867" width="8" height="1" fill="#aaaaaa" />
<rect x="570" y="864" width="3" height="1" fill="#aaaaaa" />
<rect x="570" y="860" width="3" height="1" fill="#aaaaaa" />
<rect x="570" y="856" width="3" height="1" fill="#aaaaaa" />
<rect x="570" y="852" width="3" height="1" fill="#aaaaaa" />
<rect x="565" y="848" width="8" height="1" fill="#aaaaaa" />
<rect x="570" y="845" width="3" height="1" fill="#aaaaaa" />
<rect x="570" y="841" width="3" height="1" fill="#aaaaaa" />
<rect x="570" y="837" width="3" height="1" fill="#aaaaaa" />
<rect x="570" y="833" width="3" height="1" fill="#aaaaaa" />
<rect x="565" y="830" width="8" height="1" fill="#aaaaaa" />
<rect x="570" y="826" width="3" height="1" fill="#aaaaaa" />
<rect x="570" y="822" width="3" height="1" fill="#aaaaaa" />
<rect x="570" y="818" width="3" height="1" fill="#aaaaaa" />
<rect x="570" y="814" width="3" height="1" fill="#aaaaaa" />
<rect x="565" y="811" width="8" height="1" fill="#aaaaaa" />
<rect x="570" y="807" width="3" height="1" fill="#aaaaaa" />
<rect x="570" y="803" width="3" height="1" fill="#aaaaaa" />
<rect x="570" y="799" width="3" height="1" fill="#aaaaaa" />
<rect x="570" y="796" width="3" height="1" fill="#aaaaaa" />
<rect x="565" y="792" width="8" height="1" fill="#aaaaaa" />
<rect x="570" y="788" width="3" height="1" fill="#aaaaaa" />
<rect x="570" y="784" width="3" height="1" fill="#aaaaaa" />
<rect x="570" y="780" width="3" height="1" fill="#aaaaaa" />
<rect x="570" y="777" width="3" height="1" fill="#aaaaaa" />
<rect x="565" y="773" width="8" height="1" fill="#aaaaaa" />
<rect x="570" y="769" width="3" height="1" fill="#aaaaaa" />
<rect x="570" y="765" width="3" height="1" fill="#aaaaaa" />
<rect x="570" y="762" width="3" height="1" fill="#aaaaaa" />
<rect x="570" y="758" width="3" height="1" fill="#aaaaaa" />
<rect x="565" y="754" width="8" height="1" fill="#aaaaaa" />
<rect x="570" y="750" width="3" height="1" fill="#aaaaaa" />
<rect x="570" y="746" width="3" height="1" fill="#aaaaaa" />
<rect x="570" y="743" width="3" height="1" fill="#aaaaaa" />
<rect x="570" y="739" width="3" height="1" fill="#aaaaaa" />
<rect x="565" y="735" width="8" height="1" fill="#aaaaaa" />
<rect x="570" y="731" width="3" height="1" fill="#aaaaaa" />
<rect x="570" y="728" width="3" height="1" fill="#aaaaaa" />
<rect x="570" y="724" width="3" height="1" fill="#aaaaaa" />
<rect x="570" y="720" width="3" height="1" fill="#aaaaaa" />
<rect x="565" y="716" width="8" height="1" fill="#aaaaaa" />
<rect x="570" y="712" width="3" height="1" fill="#aaaaaa" />
<rect x="570" y="709" width="3" height="1" fill="#aaaaaa" />
<rect x="570" y="705" width="3" height="1" fill="#aaaaaa" />
<rect x="570" y="701" width="3" height="1" fill="#aaaaaa" />
<rect x="565" y="697" width="8" height="1" fill="#aaaaaa" />
<text x="558.5" y="891" fill="#1ea43c" font-size="12" text-anchor="end" >-5.0</text>
<text x="558.5" y="872" fill="#1ea43c" font-size="12" text-anchor="end" >-4.0</text>
<text x="558.5" y="853" fill="#1ea43c" font-size="12" text-anchor="end" >-3.0</text>
<text x="558.5" y="835" fill="#1ea43c" font-size="12" text-anchor="end" >-2.0</text>
<text x="558.5" y="816" fill="#1ea43c" font-size="12" text-anchor="end" >-1.0</text>
<text x="558.5" y="797" fill="#1ea43c" font-size="12" text-anchor="end" >0.0</text>
<text x="558.5" y="778" fill="#1ea43c" font-size="12" text-anchor="end" >1.0</text>
<text x="558.5" y="759" fill="#1ea43c" font-size="12" text-anchor="end" >2.0</text>
<text x="558.5" y="740" fill="#1ea43c" font-size="12" text-anchor="end" >3.0</text>
<text x="558.5" y="721" fill="#1ea43c" font-size="12" text-anchor="end" >4.0</text>
<text x="558.5" y="702" fill="#1ea43c" font-size="12" text-anchor="end" >5.0</text>
<text transform="translate(518.5,791.5) rotate(-90)" fill="#1ea43c" font-size="12" text-anchor="middle" textLength="96" lengthAdjust="spacing">LamLabOKautronic</text>
<rect x="574" y="763" width="880" height="1" fill="#a030d0" />
<rect x="574" y="768" width="880" height="2" fill="#30a808" />
<rect x="574" y="773" width="880" height="2" fill="#0808a0" />
<path d="M576 768h1v1h-1zM576 773h1v1h-1zM589 768h1v1h-1zM589 773h1v1h-1zM592 768h1v1h-1zM592 773h1v1h-1zM604 768h2v1h-1zM604 773h1v1h-1zM611 768h1v1h-1zM611 773h1v1h-1zM614 768h1v1h-1zM614 773h1v1h-1zM632 768h1v1h-1zM632 773h1v1h-1zM658 768h2v1h-1zM658 773h1v1h-1zM675 768h1v1h-1zM675 773h1v1h-1zM684 768h2v1h-1zM684 773h1v1h-1zM690 768h1v1h-1zM690 773h1v1h-1zM717 768h1v1h-1zM717 773h1v1h-1zM728 768h1v1h-1zM728 773h1v1h-1zM732 768h1v1h-1zM732 773h1v1h-1zM734 768h1v1h-1zM734 773h1v1h-1zM774 768h1v1h-1zM774 773h1v1h-1zM792 768h1v1h-1zM792 773h1v1h-1zM824 768h1v1h-1zM824 773h1v1h-1zM837 768h2v1h-1zM837 773h1v1h-1zM851 768h1v1h-1zM851 773h1v1h-1zM857 768h1v1h-1zM857 773h1v1h-1zM877 768h1v1h-1zM877 773h1v1h-1zM896 768h2v1h-1zM896 773h1v1h-1zM923 768h1v1h-1zM923 773h1v1h-1zM935 768h1v1h-1zM935 773h1v1h-1zM942 768h1v1h-1zM942 773h1v1h-1zM967 768h1v1h-1zM967 773h1v1h-1zM978 768h1v1h-1zM978 773h1v1h-1zM991 768h2v1h-1zM991 773h1v1h-1zM1005 768h1v1h-1zM1005 773h1v1h-1zM1034 768h1v1h-1zM1034 773h1v1h-1zM1043 768h1v1h-1zM1043 773h1v1h-1zM1048 768h1v1h-1zM1048 773h1v1h-1zM1065 768h1v1h-1zM1065 773h1v1h-1zM1067 768h1v1h-1zM1067 773h1v1h-1zM1077 768h1v1h-1zM1077 773h1v1h-1zM1089 768h1v1h-1zM1089 773h1v1h-1zM1100 768h2v1h-1zM1100 773h1v1h-1zM1142 768h1v1h-1zM1142 773h1v1h-1zM1162 768h2v1h-1zM1162 773h1v1h-1zM1183 768h1v1h-1zM1183 773h1v1h-1zM1193 768h2v1h-1zM1193 773h1v1h-1zM1199 768h1v1h-1zM1199 773h1v1h-1zM1208 768h1v1h-1zM1208 773h1v1h-1zM1222 768h2v1h-1zM1222 773h1v1h-1zM1258 768h1v1h-1zM1258 773h1v1h-1zM1266 768h1v1h-1zM1266 773h1v1h-1zM1279 768h1v1h-1zM1279 773h1v1h-1zM1289 768h2v1h-1zM1289 773h1v1h-1zM1324 768h1v1h-1zM1324 773h1v1h-1zM1356 768h1v1h-1zM1356 773h1v1h-1zM1375 768h2v1h-1zM1375 773h1v1h-1zM1384 768h1v1h-1zM1384 773h1v1h-1zM1392 768h1v1h-1zM1392 773h1v1h-1zM1400 768h1v1h-1zM1400 773h1v1h-1zM1426 768h2v1h-1zM1426 773h1v1h-1zM1435 768h1v1h-1zM1435 773h1v1h-1zM1447 768h1v1h-1zM1447 773h1v1h-1z" fill="#fff" shape-rendering="crispEdges"/>
<rect x="647" y="764" width="2" height="1" fill="#a030d0" />
<rect x="667" y="764" width="2" height="1" fill="#a030d0" />
<rect x="1003" y="764" width="2" height="1" fill="#a030d0" />
<rect x="1200" y="764" width="2" height="1" fill="#a030d0" />
<rect x="1255" y="764" width="2" height="1" fill="#a030d0" />
<rect x="1282" y="764" width="2" height="1" fill="#a030d0" />
<rect x="1150" y="764" width="9" height="1" fill="#a030d0" />
<rect x="1150" y="775" width="4" height="1" fill="#0808a0" />
<rect x="574" y="857" width="880" height="1" fill="#d04878" />
<rect x="574" y="877" width="880" height="1" fill="#30a8a8" />
<rect x="574" y="882" width="880" height="2" fill="#1c6a08" />
<path d="M580 884h1v1h-1zM600 884h2v1h-1zM614 884h2v1h-1zM622 884h2v1h-1zM635 884h5v1h-1zM648 884h3v1h-1zM668 884h1v1h-1zM676 884h1v1h-1zM688 884h1v1h-1zM708 884h1v1h-1zM726 884h5v1h-1zM745 884h1v1h-1zM764 884h2v1h-1zM780 884h3v1h-1zM794 884h2v1h-1zM802 884h1v1h-1zM806 884h3v1h-1zM826 884h5v1h-1zM847 884h3v1h-1zM866 884h5v1h-1zM888 884h5v1h-1zM903 884h2v1h-1zM914 884h3v1h-1zM927 884h2v1h-1zM943 884h1v1h-1zM965 884h2v1h-1zM987 884h2v1h-1zM999 884h3v1h-1zM1008 884h3v1h-1zM1030 884h1v1h-1zM1035 884h5v1h-1zM1043 884h3v1h-1zM1057 884h3v1h-1zM1065 884h3v1h-1zM1068 884h1v1h-1zM1087 884h1v1h-1zM1101 884h1v1h-1zM1109 884h2v1h-1zM1130 884h5v1h-1zM1151 884h1v1h-1zM1157 884h2v1h-1zM1175 884h2v1h-1zM1197 884h3v1h-1zM1212 884h2v1h-1zM1230 884h2v1h-1zM1242 884h3v1h-1zM1252 884h3v1h-1zM1272 884h5v1h-1zM1287 884h5v1h-1zM1300 884h3v1h-1zM1317 884h5v1h-1zM1338 884h1v1h-1zM1349 884h2v1h-1zM1369 884h5v1h-1zM1389 884h3v1h-1zM1404 884h5v1h-1zM1426 884h1v1h-1zM1433 884h1v1h-1z" fill="#1c6a08" shape-rendering="crispEdges"/>
<path d="M580 783h2v5h-2zM589 796h2v6h-2zM602 796h2v6h-2zM639 781h2v7h-2zM650 781h3v7h-2zM677 781h3v7h-2zM667 796h2v7h-2zM703 781h3v7h-2zM728 781h2v7h-2zM749 778h2v10h-2zM753 780h2v8h-2zM760 781h2v7h-2zM764 781h2v7h-2zM832 782h2v6h-2zM841 783h2v5h-2zM852 783h3v5h-2zM858 782h2v6h-2zM1013 784h3v4h-2zM1016 784h3v4h-2zM1050 785h2v3h-2zM1056 785h3v3h-2zM1133 784h2v4h-2zM1140 784h3v4h-2zM1223 785h3v3h-2zM1232 785h2v3h-2zM1270 796h2v4h-2zM1310 784h2v4h-2zM1335 796h2v4h-2zM1408 796h2v4h-2zM1445 784h2v4h-2zM810 784h2v4h-2zM815 784h2v4h-2zM749 776h8v3h-8zM758 780h8v3h-8z" fill="#999"/>
<rect x="767" y="770" width="1" height="18" fill="#5050b0" />
<path d="M574 788h5v2h-5zM580 789h2v5h-2zM583 797h6v3h-6zM590 796h4v3h-4zM594 788h1v10h-1zM594 795h9v3h-9zM602 788h1v10h-1zM603 788h7v5h-7zM610 788h6v1h-6zM616 788h8v8h-8zM624 788h1v10h-1zM625 788h3v8h-3zM628 788h7v1h-7zM635 788h4v1h-4zM639 788h6v1h-6zM645 788h3v1h-3zM648 788h3v5h-3zM651 788h6v4h-6zM657 788h8v4h-8zM665 788h8v5h-8zM673 788h1v10h-1zM673 795h7v3h-7zM679 788h1v10h-1zM680 788h4v4h-4zM680 788h1v8h-1zM684 788h8v4h-8zM688 788h2v8h-1zM692 788h7v1h-7zM699 783h1v6h-1zM700 788h3v10h-3zM703 788h1v10h-1zM703 795h7v3h-7zM709 788h1v10h-1zM710 788h4v1h-4zM714 788h1v11h-1zM715 788h2v8h-2zM717 788h3v1h-3zM720 788h10v8h-10zM722 788h2v10h-1zM730 783h1v6h-1zM731 788h4v5h-4zM735 788h7v5h-7zM742 788h3v11h-3zM745 788h3v10h-3zM748 788h4v1h-4zM752 788h5v8h-5zM754 788h1v10h-1zM757 788h5v1h-5zM762 788h2v10h-2zM764 788h6v1h-6zM770 783h1v6h-1zM771 788h3v4h-3zM772 788h1v10h-1zM774 788h1v4h-1zM775 788h3v5h-3zM777 788h2v8h-1zM778 788h3v1h-3zM781 788h1v9h-1zM782 788h1v9h-1zM783 788h3v1h-3zM786 788h4v1h-4zM790 788h3v10h-3zM793 788h7v1h-7zM800 788h2v1h-2zM802 788h5v1h-5zM807 788h6v1h-6zM813 788h5v8h-5zM815 788h2v9h-1zM818 788h4v1h-4zM822 788h4v5h-4zM823 788h2v8h-1zM826 788h5v4h-5zM831 788h3v10h-3zM834 783h1v6h-1zM835 788h3v4h-3zM836 788h1v9h-1zM838 788h3v1h-3zM841 788h3v5h-3zM842 788h2v10h-1zM844 788h3v5h-3zM844 788h2v8h-1zM847 788h6v8h-6zM853 788h2v11h-2zM855 788h6v8h-6zM861 788h3v8h-3zM864 788h5v1h-5zM869 788h6v5h-6zM875 788h4v1h-4zM879 788h4v1h-4zM883 783h1v6h-1zM884 788h9v5h-9zM890 788h1v9h-1zM893 788h3v1h-3zM896 788h3v4h-3zM897 788h2v9h-1zM899 788h5v1h-5zM904 788h6v4h-6zM910 788h5v1h-5zM915 788h6v1h-6zM921 788h3v8h-3zM924 788h6v1h-6zM930 788h1v8h-1zM931 788h5v1h-5zM936 788h2v9h-2zM938 788h3v10h-3zM941 788h2v11h-2zM943 788h7v4h-7zM950 788h3v5h-3zM953 788h3v1h-3zM956 788h3v4h-3zM957 788h2v9h-1zM959 788h3v1h-3zM962 788h8v4h-8zM970 788h8v8h-8zM970 788h2v8h-1zM978 788h6v4h-6zM984 788h9v5h-9zM985 788h2v10h-1zM993 788h4v1h-4zM997 788h3v5h-3zM999 788h2v10h-1z" fill="#1ea43c" shape-rendering="crispEdges"/>
<path d="M1000 788H1001V794H1005V788H1006V794H1009V786H1012V793H1014V788H1016V793H1018V789H1020V792H1023V790H1025V795H1027V790H1028V795H1030V787H1031V793H1034V790H1036V793H1038V789H1040V796H1042V787H1044V793H1046V792H1050V791H1051V796H1053V790H1056V797H1058V787H1061V793H1064V790H1066V796H1067V790H1068V794H1069V790H1071V796H1074V786H1075V793H1079V786H1081V793H1082V791H1085V788H1086V796H1089V789H1093V795H1095V789H1097V792H1099V790H1102V789H1105V793H1107V785H1109V795H1111V788H1112V794H1114V789H1116V795H1117V788H1119V796H1122V790H1126V792H1127V791H1130V789H1133V794H1134V789H1136V794H1138V791H1140V789H1142V795H1143V791H1146V788H1148V797H1149V791H1150V796H1153V787H1156V795H1158V791H1161V793H1164V790H1165V797H1168V789H1170V796H1171V792H1173V787H1175V796H1177V787H1181V793H1185V789H1187V793H1188V790H1191V797H1194V789H1196V793H1199V790H1200V793H1202V790H1205V794H1208V789H1210V795H1212V788H1215V794H1217V788H1219V796H1220V787H1222V795H1223V789H1225V784H1227V792H1229V789H1231V788H1233V794H1234V788H1237V795H1240V786H1242V795H1245V787H1248V794H1249V785H1251V793H1252V786H1254V792H1256V785H1259V794H1260V787H1264V793H1266V786H1268V795H1271V788H1273V785H1276V792H1278V786H1282V792H1283V786H1285V793H1286V786H1287V794H1289V788H1290V792H1292V787H1293V791H1294V789H1297V787H1300V794H1304V787H1308V795H1309V787H1311V795H1313V788H1316V793H1318V785H1319V794H1323V788H1327V792H1330V790H1333V785H1337V791H1338V789H1342V787H1344V791H1347V787H1350V794H1352V787H1355V794H1358V787H1359V794H1360V789H1363V786H1365V794H1368V785H1372V793H1375V786H1376V793H1377V786H1378V794H1381V786H1384V794H1387V786H1390V793H1391V786H1394V794H1395V787H1398V795H1399V786H1401V794H1404V787H1407V795H1408V787H1410V792H1414V789H1416V787H1419V794H1422V788H1424V792H1427V787H1430V793H1432V789H1433V792H1434V790H1437V787H1440V795H1442V790H1444V792H1446V789H1448V794H1451V790H1454V795" fill="none" stroke="#1ea43c" stroke-width="1.25" shape-rendering="crispEdges"/>
<path d="M1071 788h4v3h-4zM1117 788h4v3h-4zM1194 788h2v3h-2zM1284 788h3v4h-3zM1449 788h3v3h-3z" fill="#1ea43c" shape-rendering="crispEdges"/>
<rect x="1084" y="696" width="1" height="192" fill="#000" />
<path d="M564.5 786.2L573 790.5L564.5 794.8Z" fill="#18a030" stroke="#000" stroke-width="1"/>
<text x="579" y="794.5" fill="#000" font-size="10" text-anchor="start" textLength="13" lengthAdjust="spacing" >0.1</text>
<path d="M579 890.5L586.6 890.5L582.8 897Z" fill="#18a030" stroke="#0a400a" stroke-width="0.8"/>
<text x="590" y="897.3" fill="#000" font-size="10" text-anchor="start" textLength="16.5" lengthAdjust="spacing" >-0.3</text>
<path d="M1008.3 693.5L1012.5 686.3L1016.7 693.5Z" fill="#18a030" stroke="#0a400a" stroke-width="0.8"/>
<text x="1020" y="693.5" fill="#000" font-size="10" text-anchor="start" textLength="13" lengthAdjust="spacing" >0.4</text>
<rect x="574" y="898" width="883" height="1" fill="#000" />
<rect x="577" y="899" width="1" height="4" fill="#000" />
<rect x="596" y="899" width="1" height="4" fill="#000" />
<rect x="616" y="899" width="1" height="9" fill="#000" />
<rect x="635" y="899" width="1" height="4" fill="#000" />
<rect x="654" y="899" width="1" height="4" fill="#000" />
<rect x="674" y="899" width="1" height="4" fill="#000" />
<rect x="693" y="899" width="1" height="4" fill="#000" />
<rect x="712" y="899" width="1" height="9" fill="#000" />
<rect x="732" y="899" width="1" height="4" fill="#000" />
<rect x="751" y="899" width="1" height="4" fill="#000" />
<rect x="770" y="899" width="1" height="4" fill="#000" />
<rect x="790" y="899" width="1" height="4" fill="#000" />
<rect x="809" y="899" width="1" height="9" fill="#000" />
<rect x="828" y="899" width="1" height="4" fill="#000" />
<rect x="848" y="899" width="1" height="4" fill="#000" />
<rect x="867" y="899" width="1" height="4" fill="#000" />
<rect x="886" y="899" width="1" height="4" fill="#000" />
<rect x="906" y="899" width="1" height="9" fill="#000" />
<rect x="925" y="899" width="1" height="4" fill="#000" />
<rect x="944" y="899" width="1" height="4" fill="#000" />
<rect x="964" y="899" width="1" height="4" fill="#000" />
<rect x="983" y="899" width="1" height="4" fill="#000" />
<rect x="1002" y="899" width="1" height="9" fill="#000" />
<rect x="1022" y="899" width="1" height="4" fill="#000" />
<rect x="1041" y="899" width="1" height="4" fill="#000" />
<rect x="1060" y="899" width="1" height="4" fill="#000" />
<rect x="1079" y="899" width="1" height="4" fill="#000" />
<rect x="1099" y="899" width="1" height="9" fill="#000" />
<rect x="1118" y="899" width="1" height="4" fill="#000" />
<rect x="1137" y="899" width="1" height="4" fill="#000" />
<rect x="1157" y="899" width="1" height="4" fill="#000" />
<rect x="1176" y="899" width="1" height="4" fill="#000" />
<rect x="1195" y="899" width="1" height="9" fill="#000" />
<rect x="1215" y="899" width="1" height="4" fill="#000" />
<rect x="1234" y="899" width="1" height="4" fill="#000" />
<rect x="1253" y="899" width="1" height="4" fill="#000" />
<rect x="1273" y="899" width="1" height="4" fill="#000" />
<rect x="1292" y="899" width="1" height="9" fill="#000" />
<rect x="1311" y="899" width="1" height="4" fill="#000" />
<rect x="1331" y="899" width="1" height="4" fill="#000" />
<rect x="1350" y="899" width="1" height="4" fill="#000" />
<rect x="1369" y="899" width="1" height="4" fill="#000" />
<rect x="1389" y="899" width="1" height="9" fill="#000" />
<rect x="1408" y="899" width="1" height="4" fill="#000" />
<rect x="1427" y="899" width="1" height="4" fill="#000" />
<rect x="1447" y="899" width="1" height="4" fill="#000" />
<rect x="1084" y="899" width="1" height="9" fill="#000" />
<text x="615.5" y="920" fill="#000" font-size="12" text-anchor="middle" textLength="75" lengthAdjust="spacing" >16:23:20.000</text>
<text x="711.5" y="920" fill="#000" font-size="12" text-anchor="middle" textLength="75" lengthAdjust="spacing" >16:27:30.000</text>
<text x="808.5" y="920" fill="#000" font-size="12" text-anchor="middle" textLength="75" lengthAdjust="spacing" >16:31:40.000</text>
<text x="905.5" y="920" fill="#000" font-size="12" text-anchor="middle" textLength="75" lengthAdjust="spacing" >16:35:50.000</text>
<text x="1001.5" y="920" fill="#000" font-size="12" text-anchor="middle" textLength="75" lengthAdjust="spacing" >16:40:00.000</text>
<text x="1098.5" y="920" fill="#000" font-size="12" text-anchor="middle" textLength="75" lengthAdjust="spacing" >16:44:10.000</text>
<text x="1194.5" y="920" fill="#000" font-size="12" text-anchor="middle" textLength="75" lengthAdjust="spacing" >16:48:20.000</text>
<text x="1291.5" y="920" fill="#000" font-size="12" text-anchor="middle" textLength="75" lengthAdjust="spacing" >16:52:30.000</text>
<text x="1388.5" y="920" fill="#000" font-size="12" text-anchor="middle" textLength="75" lengthAdjust="spacing" >16:56:40.000</text>
<text x="510" y="910" fill="#000" font-size="12" text-anchor="start" textLength="27" lengthAdjust="spacing" >Time</text>
<text x="510" y="924" fill="#000" font-size="12" text-anchor="start" textLength="14" lengthAdjust="spacing" >(s)</text>
<rect x="574" y="925" width="881" height="13" fill="#dbe8fb" />
<defs><linearGradient id="th" x1="0" y1="0" x2="0" y2="1"><stop offset="0" stop-color="#a9c9f5"/><stop offset="1" stop-color="#8ab3ec"/></linearGradient></defs>
<rect x="773.5" y="926.5" width="495" height="10" fill="url(#th)" stroke="#5b86c8" stroke-width="1" />
<path d="M576 931.5L584 927L584 936Z" fill="#5b8ad0"/><path d="M1453 931.5L1445 927L1445 936Z" fill="#5b8ad0"/>
</svg>
</body></html>
